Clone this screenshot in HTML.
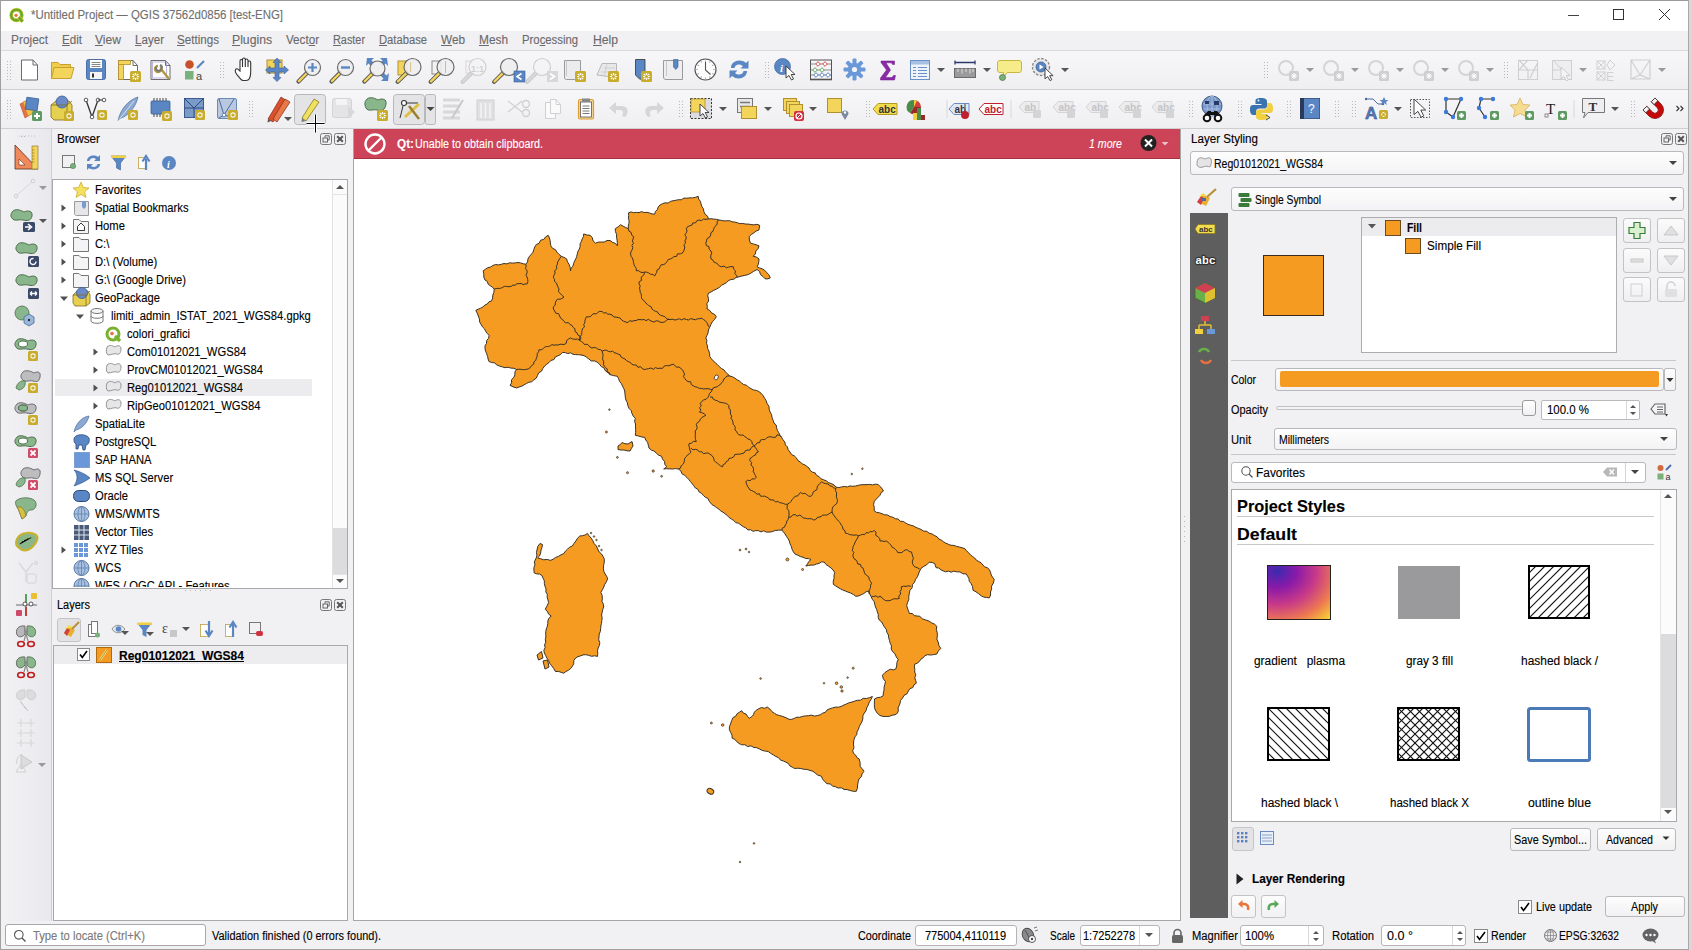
<!DOCTYPE html><html><head><meta charset="utf-8"><style>
html,body{margin:0;padding:0;width:1692px;height:950px;overflow:hidden;background:#fff;}
body{position:relative;font-family:"Liberation Sans", sans-serif;}
.t{position:absolute;white-space:nowrap;line-height:1;-webkit-text-stroke:0.12px currentColor;}
svg{overflow:visible;position:absolute}
</style></head><body>
<div style="position:absolute;left:0px;top:0px;width:1692px;height:950px;box-sizing:border-box;background:#d8d8d8"></div>
<div style="position:absolute;left:0px;top:0px;width:1689px;height:950px;box-sizing:border-box;background:#f1f0f3;border-left:1px solid #a0a0a2;border-top:1px solid #9a9a9e;border-right:1px solid #a8a8ac;border-bottom:1px solid #a0a0a2"></div>
<div style="position:absolute;left:1px;top:1px;width:1687px;height:30px;box-sizing:border-box;background:#fff"></div>
<svg style="position:absolute;left:9px;top:8px" width="18" height="18" viewBox="0 0 18 18"><g transform="scale(0.88)"><circle cx="8.5" cy="8" r="6" fill="#fff" stroke="#e8d040" stroke-width="4.6"/><circle cx="8.5" cy="8" r="6" fill="none" stroke="#6aa82a" stroke-width="3"/><path d="M11 10.5L15.5 15.5" stroke="#e8d040" stroke-width="4.6"/><path d="M11 10.5L15.5 15.5" stroke="#6aa82a" stroke-width="3"/><circle cx="8" cy="8.3" r="1.8" fill="#e87030"/></g></svg>
<div class="t" style="left:31px;top:9.04px;font-size:12px;color:#6f6f6f;transform:scaleX(0.9541);transform-origin:0 0;">*Untitled Project — QGIS 37562d0856 [test-ENG]</div>
<svg style="position:absolute;left:1567px;top:8px" width="14" height="14" viewBox="0 0 14 14"><path d="M1 7.5H12" stroke="#444" stroke-width="1"/></svg>
<svg style="position:absolute;left:1612px;top:8px" width="14" height="14" viewBox="0 0 14 14"><rect x="1.5" y="1.5" width="10" height="10" fill="none" stroke="#333" stroke-width="1"/></svg>
<svg style="position:absolute;left:1658px;top:8px" width="14" height="14" viewBox="0 0 14 14"><path d="M1 1L12 12M12 1L1 12" stroke="#333" stroke-width="1"/></svg>
<div style="position:absolute;left:1px;top:31px;width:1687px;height:19px;box-sizing:border-box;background:#f1f0f3"></div>
<div class="t" style="left:11px;top:34.04px;font-size:12px;color:#6a6a6a;transform:scaleX(0.9907);transform-origin:0 0;">Pro<u>j</u>ect</div>
<div class="t" style="left:62px;top:34.04px;font-size:12px;color:#6a6a6a;transform:scaleX(0.9672);transform-origin:0 0;"><u>E</u>dit</div>
<div class="t" style="left:95px;top:34.04px;font-size:12px;color:#6a6a6a;transform:scaleX(1.0080);transform-origin:0 0;"><u>V</u>iew</div>
<div class="t" style="left:135px;top:34.04px;font-size:12px;color:#6a6a6a;transform:scaleX(0.9661);transform-origin:0 0;"><u>L</u>ayer</div>
<div class="t" style="left:177px;top:34.04px;font-size:12px;color:#6a6a6a;transform:scaleX(0.9686);transform-origin:0 0;"><u>S</u>ettings</div>
<div class="t" style="left:232px;top:34.04px;font-size:12px;color:#6a6a6a;transform:scaleX(1.0163);transform-origin:0 0;"><u>P</u>lugins</div>
<div class="t" style="left:286px;top:34.04px;font-size:12px;color:#6a6a6a;transform:scaleX(0.9700);transform-origin:0 0;">Vect<u>o</u>r</div>
<div class="t" style="left:333px;top:34.04px;font-size:12px;color:#6a6a6a;transform:scaleX(0.9054);transform-origin:0 0;"><u>R</u>aster</div>
<div class="t" style="left:379px;top:34.04px;font-size:12px;color:#6a6a6a;transform:scaleX(0.9344);transform-origin:0 0;"><u>D</u>atabase</div>
<div class="t" style="left:441px;top:34.04px;font-size:12px;color:#6a6a6a;transform:scaleX(0.9813);transform-origin:0 0;"><u>W</u>eb</div>
<div class="t" style="left:479px;top:34.04px;font-size:12px;color:#6a6a6a;transform:scaleX(0.9883);transform-origin:0 0;"><u>M</u>esh</div>
<div class="t" style="left:522px;top:34.04px;font-size:12px;color:#6a6a6a;transform:scaleX(0.9433);transform-origin:0 0;">Pro<u>c</u>essing</div>
<div class="t" style="left:593px;top:34.04px;font-size:12px;color:#6a6a6a;transform:scaleX(1.0129);transform-origin:0 0;"><u>H</u>elp</div>
<div style="position:absolute;left:1px;top:50px;width:1687px;height:1px;box-sizing:border-box;background:#dadada"></div>
<div style="position:absolute;left:1px;top:51px;width:1687px;height:38px;box-sizing:border-box;background:linear-gradient(#f7f7f9,#efeff2)"></div>
<div style="position:absolute;left:1px;top:89px;width:1687px;height:1px;box-sizing:border-box;background:#cfcfd2"></div>
<div style="position:absolute;left:1px;top:90px;width:1687px;height:38px;box-sizing:border-box;background:linear-gradient(#f7f7f9,#efeff2)"></div>
<div style="position:absolute;left:1px;top:128px;width:1687px;height:1px;box-sizing:border-box;background:#cfcfd2"></div>
<div style="position:absolute;left:1px;top:129px;width:51px;height:792px;box-sizing:border-box;background:linear-gradient(90deg,#f2f1f4,#e9e8ec)"></div>
<div style="position:absolute;left:51px;top:129px;width:1px;height:792px;box-sizing:border-box;background:#d0d0d3"></div>
<div class="t" style="left:57px;top:132.84px;font-size:12px;color:#000;transform:scaleX(0.9770);transform-origin:0 0;">Browser</div>
<div style="position:absolute;left:52px;top:179px;width:296px;height:410px;box-sizing:border-box;background:#fff;border:1px solid #a9a9ac"></div>
<div style="position:absolute;left:332px;top:180px;width:15px;height:408px;box-sizing:border-box;background:#fbfbfc;border-left:1px solid #e2e2e4"></div>
<div style="position:absolute;left:333px;top:528px;width:14px;height:46px;box-sizing:border-box;background:#dcdcdf"></div>
<div style="position:absolute;left:333px;top:194px;width:14px;height:1px;box-sizing:border-box;background:#e4e4e6"></div>
<div style="position:absolute;left:333px;top:574px;width:14px;height:1px;box-sizing:border-box;background:#e4e4e6"></div>
<svg style="position:absolute;left:334px;top:182px" width="12" height="10" viewBox="0 0 12 10"><path d="M2 7L6 3L10 7Z" fill="#555"/></svg>
<svg style="position:absolute;left:334px;top:576px" width="12" height="10" viewBox="0 0 12 10"><path d="M2 3L6 7L10 3Z" fill="#555"/></svg>
<div style="position:absolute;left:55px;top:379px;width:257px;height:17px;box-sizing:border-box;background:#ececef"></div>
<div style="position:absolute;left:53px;top:180px;width:279px;height:407px;overflow:hidden">
<div id="bi0" style="position:absolute;left:20px;top:2px;width:16px;height:16px"></div>
<div class="t" style="left:42px;top:3.64px;font-size:12px;color:#000;transform:scaleX(0.935);transform-origin:0 0">Favorites</div>
<svg style="left:7px;top:23px" width="8" height="10"><path d="M1.5 1.5L6 5L1.5 8.5Z" fill="#505050"/></svg>
<div id="bi1" style="position:absolute;left:20px;top:20px;width:16px;height:16px"></div>
<div class="t" style="left:42px;top:21.64px;font-size:12px;color:#000;transform:scaleX(0.935);transform-origin:0 0">Spatial Bookmarks</div>
<svg style="left:7px;top:41px" width="8" height="10"><path d="M1.5 1.5L6 5L1.5 8.5Z" fill="#505050"/></svg>
<div id="bi2" style="position:absolute;left:20px;top:38px;width:16px;height:16px"></div>
<div class="t" style="left:42px;top:39.64px;font-size:12px;color:#000;transform:scaleX(0.935);transform-origin:0 0">Home</div>
<svg style="left:7px;top:59px" width="8" height="10"><path d="M1.5 1.5L6 5L1.5 8.5Z" fill="#505050"/></svg>
<div id="bi3" style="position:absolute;left:20px;top:56px;width:16px;height:16px"></div>
<div class="t" style="left:42px;top:57.64px;font-size:12px;color:#000;transform:scaleX(0.935);transform-origin:0 0">C:\</div>
<svg style="left:7px;top:77px" width="8" height="10"><path d="M1.5 1.5L6 5L1.5 8.5Z" fill="#505050"/></svg>
<div id="bi4" style="position:absolute;left:20px;top:74px;width:16px;height:16px"></div>
<div class="t" style="left:42px;top:75.64px;font-size:12px;color:#000;transform:scaleX(0.935);transform-origin:0 0">D:\ (Volume)</div>
<svg style="left:7px;top:95px" width="8" height="10"><path d="M1.5 1.5L6 5L1.5 8.5Z" fill="#505050"/></svg>
<div id="bi5" style="position:absolute;left:20px;top:92px;width:16px;height:16px"></div>
<div class="t" style="left:42px;top:93.64px;font-size:12px;color:#000;transform:scaleX(0.935);transform-origin:0 0">G:\ (Google Drive)</div>
<svg style="left:6px;top:115px" width="10" height="8"><path d="M1 1.5L9 1.5L5 6Z" fill="#505050"/></svg>
<div id="bi6" style="position:absolute;left:20px;top:110px;width:16px;height:16px"></div>
<div class="t" style="left:42px;top:111.64px;font-size:12px;color:#000;transform:scaleX(0.935);transform-origin:0 0">GeoPackage</div>
<svg style="left:22px;top:133px" width="10" height="8"><path d="M1 1.5L9 1.5L5 6Z" fill="#505050"/></svg>
<div id="bi7" style="position:absolute;left:36px;top:128px;width:16px;height:16px"></div>
<div class="t" style="left:58px;top:129.64px;font-size:12px;color:#000;transform:scaleX(0.935);transform-origin:0 0">limiti_admin_ISTAT_2021_WGS84.gpkg</div>
<div id="bi8" style="position:absolute;left:52px;top:146px;width:16px;height:16px"></div>
<div class="t" style="left:74px;top:147.64px;font-size:12px;color:#000;transform:scaleX(0.935);transform-origin:0 0">colori_grafici</div>
<svg style="left:39px;top:167px" width="8" height="10"><path d="M1.5 1.5L6 5L1.5 8.5Z" fill="#505050"/></svg>
<div id="bi9" style="position:absolute;left:52px;top:164px;width:16px;height:16px"></div>
<div class="t" style="left:74px;top:165.64px;font-size:12px;color:#000;transform:scaleX(0.935);transform-origin:0 0">Com01012021_WGS84</div>
<svg style="left:39px;top:185px" width="8" height="10"><path d="M1.5 1.5L6 5L1.5 8.5Z" fill="#505050"/></svg>
<div id="bi10" style="position:absolute;left:52px;top:182px;width:16px;height:16px"></div>
<div class="t" style="left:74px;top:183.64px;font-size:12px;color:#000;transform:scaleX(0.935);transform-origin:0 0">ProvCM01012021_WGS84</div>
<svg style="left:39px;top:203px" width="8" height="10"><path d="M1.5 1.5L6 5L1.5 8.5Z" fill="#505050"/></svg>
<div id="bi11" style="position:absolute;left:52px;top:200px;width:16px;height:16px"></div>
<div class="t" style="left:74px;top:201.64px;font-size:12px;color:#000;transform:scaleX(0.935);transform-origin:0 0">Reg01012021_WGS84</div>
<svg style="left:39px;top:221px" width="8" height="10"><path d="M1.5 1.5L6 5L1.5 8.5Z" fill="#505050"/></svg>
<div id="bi12" style="position:absolute;left:52px;top:218px;width:16px;height:16px"></div>
<div class="t" style="left:74px;top:219.64px;font-size:12px;color:#000;transform:scaleX(0.935);transform-origin:0 0">RipGeo01012021_WGS84</div>
<div id="bi13" style="position:absolute;left:20px;top:236px;width:16px;height:16px"></div>
<div class="t" style="left:42px;top:237.64px;font-size:12px;color:#000;transform:scaleX(0.935);transform-origin:0 0">SpatiaLite</div>
<div id="bi14" style="position:absolute;left:20px;top:254px;width:16px;height:16px"></div>
<div class="t" style="left:42px;top:255.64px;font-size:12px;color:#000;transform:scaleX(0.935);transform-origin:0 0">PostgreSQL</div>
<div id="bi15" style="position:absolute;left:20px;top:272px;width:16px;height:16px"></div>
<div class="t" style="left:42px;top:273.64px;font-size:12px;color:#000;transform:scaleX(0.935);transform-origin:0 0">SAP HANA</div>
<div id="bi16" style="position:absolute;left:20px;top:290px;width:16px;height:16px"></div>
<div class="t" style="left:42px;top:291.64px;font-size:12px;color:#000;transform:scaleX(0.935);transform-origin:0 0">MS SQL Server</div>
<div id="bi17" style="position:absolute;left:20px;top:308px;width:16px;height:16px"></div>
<div class="t" style="left:42px;top:309.64px;font-size:12px;color:#000;transform:scaleX(0.935);transform-origin:0 0">Oracle</div>
<div id="bi18" style="position:absolute;left:20px;top:326px;width:16px;height:16px"></div>
<div class="t" style="left:42px;top:327.64px;font-size:12px;color:#000;transform:scaleX(0.935);transform-origin:0 0">WMS/WMTS</div>
<div id="bi19" style="position:absolute;left:20px;top:344px;width:16px;height:16px"></div>
<div class="t" style="left:42px;top:345.64px;font-size:12px;color:#000;transform:scaleX(0.935);transform-origin:0 0">Vector Tiles</div>
<svg style="left:7px;top:365px" width="8" height="10"><path d="M1.5 1.5L6 5L1.5 8.5Z" fill="#505050"/></svg>
<div id="bi20" style="position:absolute;left:20px;top:362px;width:16px;height:16px"></div>
<div class="t" style="left:42px;top:363.64px;font-size:12px;color:#000;transform:scaleX(0.935);transform-origin:0 0">XYZ Tiles</div>
<div id="bi21" style="position:absolute;left:20px;top:380px;width:16px;height:16px"></div>
<div class="t" style="left:42px;top:381.64px;font-size:12px;color:#000;transform:scaleX(0.935);transform-origin:0 0">WCS</div>
<div id="bi22" style="position:absolute;left:20px;top:398px;width:16px;height:16px"></div>
<div class="t" style="left:42px;top:399.64px;font-size:12px;color:#000;transform:scaleX(0.935);transform-origin:0 0">WFS / OGC API - Features</div>
</div>
<svg style="position:absolute;left:320px;top:133px" width="12" height="12" viewBox="0 0 12 12"><rect x="0.5" y="0.5" width="11" height="11" rx="2" fill="none" stroke="#777"/><rect x="3" y="5" width="4.5" height="4" fill="none" stroke="#666"/><path d="M5 4.5V2.8H9.2V7H7.8" fill="none" stroke="#666"/></svg>
<svg style="position:absolute;left:334px;top:133px" width="12" height="12" viewBox="0 0 12 12"><rect x="0.5" y="0.5" width="11" height="11" rx="2" fill="none" stroke="#777"/><path d="M3.2 3.2L8.8 8.8M8.8 3.2L3.2 8.8" stroke="#555" stroke-width="2"/></svg>
<div style="position:absolute;left:52px;top:589px;width:296px;height:3px;box-sizing:border-box;background:#f1f0f3"></div>
<div class="t" style="left:57px;top:598.84px;font-size:12px;color:#000;transform:scaleX(0.9162);transform-origin:0 0;">Layers</div>
<svg style="position:absolute;left:320px;top:599px" width="12" height="12" viewBox="0 0 12 12"><rect x="0.5" y="0.5" width="11" height="11" rx="2" fill="none" stroke="#777"/><rect x="3" y="5" width="4.5" height="4" fill="none" stroke="#666"/><path d="M5 4.5V2.8H9.2V7H7.8" fill="none" stroke="#666"/></svg>
<svg style="position:absolute;left:334px;top:599px" width="12" height="12" viewBox="0 0 12 12"><rect x="0.5" y="0.5" width="11" height="11" rx="2" fill="none" stroke="#777"/><path d="M3.2 3.2L8.8 8.8M8.8 3.2L3.2 8.8" stroke="#555" stroke-width="2"/></svg>
<div style="position:absolute;left:57px;top:618px;width:24px;height:24px;box-sizing:border-box;background:#e2e2e5;border:1px solid #c4c4c7;border-radius:3px"></div>
<div style="position:absolute;left:53px;top:645px;width:295px;height:276px;box-sizing:border-box;background:#fff;border:1px solid #a9a9ac"></div>
<div style="position:absolute;left:54px;top:646px;width:293px;height:18px;box-sizing:border-box;background:#ededf0"></div>
<svg style="position:absolute;left:77px;top:648px" width="13" height="13" viewBox="0 0 13 13"><rect x="0.5" y="0.5" width="12" height="12" fill="#fff" stroke="#8a8a8a"/><path d="M3 6.5L5.3 9.5L10 3" fill="none" stroke="#000" stroke-width="1.6"/></svg>
<svg style="position:absolute;left:96px;top:647px" width="16" height="16" viewBox="0 0 16 16"><rect x="0.5" y="0.5" width="15" height="15" fill="#f59b21" stroke="#b06a10"/><path d="M4 13L11 3" stroke="#f2e07a" stroke-width="2.2"/><path d="M4 13L11 3" stroke="#7a6a30" stroke-width="0.6"/></svg>
<div class="t" style="left:119px;top:649.84px;font-size:12px;color:#000;font-weight:bold;transform:scaleX(1.0020);transform-origin:0 0;text-decoration:underline;">Reg01012021_WGS84</div>
<div style="position:absolute;left:353px;top:129px;width:828px;height:792px;box-sizing:border-box;background:#fff;border:1px solid #a6a6a6;border-top:none"></div>
<div style="position:absolute;left:354px;top:129px;width:826px;height:30px;box-sizing:border-box;background:#cd4357"></div>
<div style="position:absolute;left:354px;top:158px;width:826px;height:1px;box-sizing:border-box;background:#a8303f"></div>
<div class="t" style="left:1191px;top:132.84px;font-size:12px;color:#000;transform:scaleX(0.9658);transform-origin:0 0;">Layer Styling</div>
<svg style="position:absolute;left:1661px;top:133px" width="12" height="12" viewBox="0 0 12 12"><rect x="0.5" y="0.5" width="11" height="11" rx="2" fill="none" stroke="#777"/><rect x="3" y="5" width="4.5" height="4" fill="none" stroke="#666"/><path d="M5 4.5V2.8H9.2V7H7.8" fill="none" stroke="#666"/></svg>
<svg style="position:absolute;left:1675px;top:133px" width="12" height="12" viewBox="0 0 12 12"><rect x="0.5" y="0.5" width="11" height="11" rx="2" fill="none" stroke="#777"/><path d="M3.2 3.2L8.8 8.8M8.8 3.2L3.2 8.8" stroke="#555" stroke-width="2"/></svg>
<div style="position:absolute;left:1190px;top:151px;width:494px;height:24px;box-sizing:border-box;background:linear-gradient(#fdfdfd,#f3f3f5);border:1px solid #b9b9bc;border-radius:3px"></div>
<svg style="position:absolute;left:1668px;top:160px" width="10" height="6" viewBox="0 0 10 6"><path d="M1 1H9L5 5Z" fill="#444"/></svg>
<svg style="position:absolute;left:1196px;top:156px" width="17" height="13" viewBox="0 0 17 13"><path d="M2 3C4 1 7 2 9 3C11 2 14 1 15 3C16 6 15 9 14 11C12 10 9 10 7 11C4 12 2 11 1 9C1 7 1 5 2 3Z" fill="#e4e4e6" stroke="#999"/></svg>
<div class="t" style="left:1214px;top:157.84px;font-size:12px;color:#000;transform:scaleX(0.8784);transform-origin:0 0;">Reg01012021_WGS84</div>
<div style="position:absolute;left:1231px;top:187px;width:453px;height:24px;box-sizing:border-box;background:linear-gradient(#fdfdfd,#f3f3f5);border:1px solid #b9b9bc;border-radius:3px"></div>
<svg style="position:absolute;left:1668px;top:196px" width="10" height="6" viewBox="0 0 10 6"><path d="M1 1H9L5 5Z" fill="#444"/></svg>
<div class="t" style="left:1255px;top:193.84px;font-size:12px;color:#000;transform:scaleX(0.8604);transform-origin:0 0;">Single Symbol</div>
<div style="position:absolute;left:1190px;top:213px;width:38px;height:705px;box-sizing:border-box;background:#5e5e5e"></div>
<div style="position:absolute;left:1263px;top:255px;width:61px;height:61px;box-sizing:border-box;background:#f59b21;border:1px solid #3a2a20"></div>
<div style="position:absolute;left:1361px;top:217px;width:256px;height:136px;box-sizing:border-box;background:#fff;border:1px solid #adadb0"></div>
<div style="position:absolute;left:1362px;top:218px;width:254px;height:18px;box-sizing:border-box;background:#ececef"></div>
<svg style="position:absolute;left:1367px;top:223px" width="10" height="7" viewBox="0 0 10 7"><path d="M1 1H9L5 5.5Z" fill="#555"/></svg>
<div style="position:absolute;left:1385px;top:220px;width:16px;height:16px;box-sizing:border-box;background:#f59b21;border:1px solid #6a4a20"></div>
<div class="t" style="left:1407px;top:221.84px;font-size:12px;color:#000;font-weight:bold;transform:scaleX(0.8655);transform-origin:0 0;">Fill</div>
<div style="position:absolute;left:1405px;top:238px;width:16px;height:16px;box-sizing:border-box;background:#f59b21;border:1px solid #6a4a20"></div>
<div class="t" style="left:1427px;top:239.84px;font-size:12px;color:#000;transform:scaleX(0.9757);transform-origin:0 0;">Simple Fill</div>
<div style="position:absolute;left:1623px;top:218px;width:28px;height:25px;box-sizing:border-box;background:linear-gradient(#fbfbfc,#efeff1);border:1px solid #c3c3c6;border-radius:3px"></div>
<svg style="position:absolute;left:1623px;top:218px" width="28" height="25" viewBox="0 0 28 25"><path d="M11 6H17V11H22V17H17V22H11V17H6V11H11Z" transform="translate(0,-1.5) scale(1)" fill="#d8f0d0" stroke="#3a7a3a" stroke-width="1.2"/></svg>
<div style="position:absolute;left:1657px;top:218px;width:28px;height:25px;box-sizing:border-box;background:linear-gradient(#fbfbfc,#efeff1);border:1px solid #c3c3c6;border-radius:3px"></div>
<svg style="position:absolute;left:1657px;top:218px" width="28" height="25" viewBox="0 0 28 25"><path d="M7 17L14 8L21 17Z" fill="#e0e0e2" stroke="#c8c8ca"/></svg>
<div style="position:absolute;left:1623px;top:248px;width:28px;height:25px;box-sizing:border-box;background:linear-gradient(#fbfbfc,#efeff1);border:1px solid #c3c3c6;border-radius:3px"></div>
<svg style="position:absolute;left:1623px;top:248px" width="28" height="25" viewBox="0 0 28 25"><rect x="8" y="11" width="12" height="3" fill="#e0e0e2" stroke="#c8c8ca"/></svg>
<div style="position:absolute;left:1657px;top:248px;width:28px;height:25px;box-sizing:border-box;background:linear-gradient(#fbfbfc,#efeff1);border:1px solid #c3c3c6;border-radius:3px"></div>
<svg style="position:absolute;left:1657px;top:248px" width="28" height="25" viewBox="0 0 28 25"><path d="M7 8L14 17L21 8Z" fill="#e0e0e2" stroke="#c8c8ca"/></svg>
<div style="position:absolute;left:1623px;top:277px;width:28px;height:25px;box-sizing:border-box;background:linear-gradient(#fbfbfc,#efeff1);border:1px solid #c3c3c6;border-radius:3px"></div>
<svg style="position:absolute;left:1623px;top:277px" width="28" height="25" viewBox="0 0 28 25"><rect x="8" y="7" width="11" height="12" fill="none" stroke="#cfcfd1"/></svg>
<div style="position:absolute;left:1657px;top:277px;width:28px;height:25px;box-sizing:border-box;background:linear-gradient(#fbfbfc,#efeff1);border:1px solid #c3c3c6;border-radius:3px"></div>
<svg style="position:absolute;left:1657px;top:277px" width="28" height="25" viewBox="0 0 28 25"><rect x="8" y="12" width="12" height="8" rx="1" fill="#e0e0e2"/><path d="M10 12V9a4 4 0 0 1 8 0" fill="none" stroke="#d0d0d2" stroke-width="1.5"/></svg>
<div style="position:absolute;left:1231px;top:360px;width:445px;height:1px;box-sizing:border-box;background:#c8c8cb"></div>
<div class="t" style="left:1231px;top:373.84px;font-size:12px;color:#000;transform:scaleX(0.8718);transform-origin:0 0;">Color</div>
<div style="position:absolute;left:1275px;top:368px;width:389px;height:23px;box-sizing:border-box;background:linear-gradient(#fdfdfd,#f1f1f3);border:1px solid #b9b9bc;border-radius:3px"></div>
<div style="position:absolute;left:1280px;top:371px;width:379px;height:16px;box-sizing:border-box;background:#f59b21;border-radius:2px"></div>
<div style="position:absolute;left:1664px;top:368px;width:12px;height:23px;box-sizing:border-box;background:linear-gradient(#fdfdfd,#f1f1f3);border:1px solid #b9b9bc;border-radius:2px"></div>
<svg style="position:absolute;left:1665px;top:377px" width="10" height="6" viewBox="0 0 10 6"><path d="M1.5 1H8.5L5 5Z" fill="#333"/></svg>
<div class="t" style="left:1231px;top:403.84px;font-size:12px;color:#000;transform:scaleX(0.9095);transform-origin:0 0;">Opacity</div>
<div style="position:absolute;left:1276px;top:406px;width:250px;height:4px;box-sizing:border-box;background:#f3f3f5;border:1px solid #c2c2c5;border-radius:2px"></div>
<div style="position:absolute;left:1522px;top:400px;width:14px;height:16px;box-sizing:border-box;background:linear-gradient(#fff,#f0f0f2);border:1px solid #9a9a9d;border-radius:3px"></div>
<div style="position:absolute;left:1541px;top:400px;width:99px;height:20px;box-sizing:border-box;background:#fff;border:1px solid #b9b9bc;border-radius:2px"></div>
<div style="position:absolute;left:1626px;top:401px;width:1px;height:18px;box-sizing:border-box;background:#d8d8da"></div>
<svg style="position:absolute;left:1627px;top:402px" width="12" height="16" viewBox="0 0 12 16"><path d="M3 6L6 3L9 6Z M3 10L6 13L9 10Z" fill="#555"/></svg>
<div class="t" style="left:1547px;top:403.84px;font-size:12px;color:#000;transform:scaleX(0.9538);transform-origin:0 0;">100.0 %</div>
<svg style="position:absolute;left:1649px;top:400px" width="24" height="18" viewBox="0 0 24 18"><path d="M2 9L6 4H16V14H6Z" fill="#f4f4f6" stroke="#666" stroke-width="1.2"/><path d="M8 7H14M8 9.5H14M8 12H14" stroke="#666"/><path d="M16 14L19 14L17.5 16.5Z" fill="#333"/></svg>
<div class="t" style="left:1231px;top:433.84px;font-size:12px;color:#000;transform:scaleX(0.9372);transform-origin:0 0;">Unit</div>
<div style="position:absolute;left:1274px;top:428px;width:403px;height:22px;box-sizing:border-box;background:linear-gradient(#fdfdfd,#f3f3f5);border:1px solid #b9b9bc;border-radius:3px"></div>
<svg style="position:absolute;left:1659px;top:436px" width="10" height="6" viewBox="0 0 10 6"><path d="M1 1H9L5 5Z" fill="#444"/></svg>
<div class="t" style="left:1279px;top:433.84px;font-size:12px;color:#000;transform:scaleX(0.8720);transform-origin:0 0;">Millimeters</div>
<div style="position:absolute;left:1231px;top:454px;width:445px;height:1px;box-sizing:border-box;background:#c8c8cb"></div>
<div style="position:absolute;left:1231px;top:462px;width:415px;height:21px;box-sizing:border-box;background:#fff;border:1px solid #b9b9bc;border-radius:3px"></div>
<div style="position:absolute;left:1625px;top:463px;width:1px;height:19px;box-sizing:border-box;background:#d4d4d6"></div>
<svg style="position:absolute;left:1630px;top:469px" width="10" height="6" viewBox="0 0 10 6"><path d="M1 1H9L5 5Z" fill="#444"/></svg>
<svg style="position:absolute;left:1240px;top:465px" width="14" height="14" viewBox="0 0 14 14"><circle cx="6" cy="6" r="4.2" fill="none" stroke="#555" stroke-width="1.1"/><path d="M9 9L12.5 12.5" stroke="#555" stroke-width="1.3"/></svg>
<div class="t" style="left:1256px;top:466.84px;font-size:12px;color:#000;transform:scaleX(0.9929);transform-origin:0 0;">Favorites</div>
<svg style="position:absolute;left:1602px;top:466px" width="16" height="12" viewBox="0 0 16 12"><path d="M1 6L5 1.5H15V10.5H5Z" fill="#b8b8ba"/><path d="M7.5 3.5L12 8.5M12 3.5L7.5 8.5" stroke="#fff" stroke-width="1.4"/></svg>
<svg style="position:absolute;left:1656px;top:464px" width="18" height="18" viewBox="0 0 18 18"><circle cx="4.5" cy="4" r="3" fill="#d26a40"/><rect x="1.5" y="9.5" width="6" height="6" fill="#7ab07a"/><path d="M10 6L15 1" stroke="#4a6ab0" stroke-width="1.8"/><text x="9.5" y="15.5" font-size="9" font-family="Liberation Sans" fill="#333">a</text></svg>
<div style="position:absolute;left:1231px;top:489px;width:446px;height:333px;box-sizing:border-box;background:#fff;border:1px solid #a9a9ac"></div>
<div style="position:absolute;left:1660px;top:490px;width:16px;height:331px;box-sizing:border-box;background:#fbfbfc;border-left:1px solid #e4e4e6"></div>
<div style="position:absolute;left:1661px;top:634px;width:15px;height:174px;box-sizing:border-box;background:#dcdcdf"></div>
<svg style="position:absolute;left:1663px;top:492px" width="10" height="8" viewBox="0 0 10 8"><path d="M1 6L5 2L9 6Z" fill="#555"/></svg>
<svg style="position:absolute;left:1663px;top:808px" width="10" height="8" viewBox="0 0 10 8"><path d="M1 2L5 6L9 2Z" fill="#555"/></svg>
<div class="t" style="left:1237px;top:497.61px;font-size:17px;color:#000;font-weight:bold;transform:scaleX(0.9605);transform-origin:0 0;">Project Styles</div>
<div style="position:absolute;left:1237px;top:516px;width:417px;height:1px;box-sizing:border-box;background:#c8c8cb"></div>
<div class="t" style="left:1237px;top:525.61px;font-size:17px;color:#000;font-weight:bold;transform:scaleX(1.0413);transform-origin:0 0;">Default</div>
<div style="position:absolute;left:1237px;top:544px;width:417px;height:1px;box-sizing:border-box;background:#c8c8cb"></div>
<svg style="left:1267px;top:565px" width="64" height="55"><defs><radialGradient id="pl" cx="0.15" cy="0.1" r="1.25"><stop offset="0" stop-color="#3a2ab0"/><stop offset="0.25" stop-color="#8a1aa8"/><stop offset="0.5" stop-color="#c83a88"/><stop offset="0.75" stop-color="#ee7a50"/><stop offset="1" stop-color="#f8e030"/></radialGradient></defs><rect x="0.5" y="0.5" width="63" height="54" fill="url(#pl)" stroke="#222"/></svg>
<div style="position:absolute;left:1398px;top:566px;width:62px;height:53px;box-sizing:border-box;background:#9a999b"></div>
<svg style="position:absolute;left:1528px;top:565px" width="62" height="54" viewBox="0 0 62 54"><clipPath id="c1528565"><rect x="0" y="0" width="62" height="54"/></clipPath><g clip-path="url(#c1528565)"><path d="M-54 54L0 0" stroke="#111" stroke-width="1.1"/><path d="M-45 54L9 0" stroke="#111" stroke-width="1.1"/><path d="M-36 54L18 0" stroke="#111" stroke-width="1.1"/><path d="M-27 54L27 0" stroke="#111" stroke-width="1.1"/><path d="M-18 54L36 0" stroke="#111" stroke-width="1.1"/><path d="M-9 54L45 0" stroke="#111" stroke-width="1.1"/><path d="M0 54L54 0" stroke="#111" stroke-width="1.1"/><path d="M9 54L63 0" stroke="#111" stroke-width="1.1"/><path d="M18 54L72 0" stroke="#111" stroke-width="1.1"/><path d="M27 54L81 0" stroke="#111" stroke-width="1.1"/><path d="M36 54L90 0" stroke="#111" stroke-width="1.1"/><path d="M45 54L99 0" stroke="#111" stroke-width="1.1"/><path d="M54 54L108 0" stroke="#111" stroke-width="1.1"/><path d="M63 54L117 0" stroke="#111" stroke-width="1.1"/><path d="M72 54L126 0" stroke="#111" stroke-width="1.1"/><path d="M81 54L135 0" stroke="#111" stroke-width="1.1"/><path d="M90 54L144 0" stroke="#111" stroke-width="1.1"/><path d="M99 54L153 0" stroke="#111" stroke-width="1.1"/><path d="M108 54L162 0" stroke="#111" stroke-width="1.1"/></g><rect x="1" y="1" width="60" height="52" fill="none" stroke="#000" stroke-width="2"/></svg>
<svg style="position:absolute;left:1267px;top:707px" width="63" height="54" viewBox="0 0 63 54"><clipPath id="c1267707"><rect x="0" y="0" width="63" height="54"/></clipPath><g clip-path="url(#c1267707)"><path d="M-54 0L0 54" stroke="#111" stroke-width="1.1"/><path d="M-45 0L9 54" stroke="#111" stroke-width="1.1"/><path d="M-36 0L18 54" stroke="#111" stroke-width="1.1"/><path d="M-27 0L27 54" stroke="#111" stroke-width="1.1"/><path d="M-18 0L36 54" stroke="#111" stroke-width="1.1"/><path d="M-9 0L45 54" stroke="#111" stroke-width="1.1"/><path d="M0 0L54 54" stroke="#111" stroke-width="1.1"/><path d="M9 0L63 54" stroke="#111" stroke-width="1.1"/><path d="M18 0L72 54" stroke="#111" stroke-width="1.1"/><path d="M27 0L81 54" stroke="#111" stroke-width="1.1"/><path d="M36 0L90 54" stroke="#111" stroke-width="1.1"/><path d="M45 0L99 54" stroke="#111" stroke-width="1.1"/><path d="M54 0L108 54" stroke="#111" stroke-width="1.1"/><path d="M63 0L117 54" stroke="#111" stroke-width="1.1"/><path d="M72 0L126 54" stroke="#111" stroke-width="1.1"/><path d="M81 0L135 54" stroke="#111" stroke-width="1.1"/><path d="M90 0L144 54" stroke="#111" stroke-width="1.1"/><path d="M99 0L153 54" stroke="#111" stroke-width="1.1"/><path d="M108 0L162 54" stroke="#111" stroke-width="1.1"/></g><rect x="1" y="1" width="61" height="52" fill="none" stroke="#000" stroke-width="2"/></svg>
<svg style="position:absolute;left:1397px;top:707px" width="63" height="54" viewBox="0 0 63 54"><clipPath id="c1397707"><rect x="0" y="0" width="63" height="54"/></clipPath><g clip-path="url(#c1397707)"><path d="M-54 54L0 0" stroke="#111" stroke-width="1.1"/><path d="M-45 54L9 0" stroke="#111" stroke-width="1.1"/><path d="M-36 54L18 0" stroke="#111" stroke-width="1.1"/><path d="M-27 54L27 0" stroke="#111" stroke-width="1.1"/><path d="M-18 54L36 0" stroke="#111" stroke-width="1.1"/><path d="M-9 54L45 0" stroke="#111" stroke-width="1.1"/><path d="M0 54L54 0" stroke="#111" stroke-width="1.1"/><path d="M9 54L63 0" stroke="#111" stroke-width="1.1"/><path d="M18 54L72 0" stroke="#111" stroke-width="1.1"/><path d="M27 54L81 0" stroke="#111" stroke-width="1.1"/><path d="M36 54L90 0" stroke="#111" stroke-width="1.1"/><path d="M45 54L99 0" stroke="#111" stroke-width="1.1"/><path d="M54 54L108 0" stroke="#111" stroke-width="1.1"/><path d="M63 54L117 0" stroke="#111" stroke-width="1.1"/><path d="M72 54L126 0" stroke="#111" stroke-width="1.1"/><path d="M81 54L135 0" stroke="#111" stroke-width="1.1"/><path d="M90 54L144 0" stroke="#111" stroke-width="1.1"/><path d="M99 54L153 0" stroke="#111" stroke-width="1.1"/><path d="M108 54L162 0" stroke="#111" stroke-width="1.1"/><path d="M-54 0L0 54" stroke="#111" stroke-width="1.1"/><path d="M-45 0L9 54" stroke="#111" stroke-width="1.1"/><path d="M-36 0L18 54" stroke="#111" stroke-width="1.1"/><path d="M-27 0L27 54" stroke="#111" stroke-width="1.1"/><path d="M-18 0L36 54" stroke="#111" stroke-width="1.1"/><path d="M-9 0L45 54" stroke="#111" stroke-width="1.1"/><path d="M0 0L54 54" stroke="#111" stroke-width="1.1"/><path d="M9 0L63 54" stroke="#111" stroke-width="1.1"/><path d="M18 0L72 54" stroke="#111" stroke-width="1.1"/><path d="M27 0L81 54" stroke="#111" stroke-width="1.1"/><path d="M36 0L90 54" stroke="#111" stroke-width="1.1"/><path d="M45 0L99 54" stroke="#111" stroke-width="1.1"/><path d="M54 0L108 54" stroke="#111" stroke-width="1.1"/><path d="M63 0L117 54" stroke="#111" stroke-width="1.1"/><path d="M72 0L126 54" stroke="#111" stroke-width="1.1"/><path d="M81 0L135 54" stroke="#111" stroke-width="1.1"/><path d="M90 0L144 54" stroke="#111" stroke-width="1.1"/><path d="M99 0L153 54" stroke="#111" stroke-width="1.1"/><path d="M108 0L162 54" stroke="#111" stroke-width="1.1"/></g><rect x="1" y="1" width="61" height="52" fill="none" stroke="#000" stroke-width="2"/></svg>
<svg style="position:absolute;left:1527px;top:707px" width="64" height="55" viewBox="0 0 64 55"><rect x="1.5" y="1.5" width="61" height="52" rx="2" fill="#fff" stroke="#4a7ab8" stroke-width="3"/></svg>
<div class="t" style="left:1254px;top:654.84px;font-size:12px;color:#000;transform:scaleX(0.9886);transform-origin:0 0;">gradient&nbsp;&nbsp;&nbsp;plasma</div>
<div class="t" style="left:1405.5px;top:654.84px;font-size:12px;color:#000;transform:scaleX(0.9788);transform-origin:0 0;">gray 3 fill</div>
<div class="t" style="left:1520.5px;top:654.84px;font-size:12px;color:#000;transform:scaleX(0.9950);transform-origin:0 0;">hashed black /</div>
<div class="t" style="left:1260.5px;top:796.84px;font-size:12px;color:#000;transform:scaleX(0.9950);transform-origin:0 0;">hashed black \</div>
<div class="t" style="left:1389.5px;top:796.84px;font-size:12px;color:#000;transform:scaleX(0.9628);transform-origin:0 0;">hashed black X</div>
<div class="t" style="left:1527.5px;top:796.84px;font-size:12px;color:#000;transform:scaleX(1.0263);transform-origin:0 0;">outline blue</div>
<div style="position:absolute;left:1232px;top:827px;width:22px;height:24px;box-sizing:border-box;background:#e3e3e6;border:1px solid #c6c6c9;border-radius:3px"></div>
<svg style="position:absolute;left:1236px;top:831px" width="14" height="14" viewBox="0 0 14 14"><rect x="1" y="1" width="2.4" height="2.4" fill="#5a82c0"/><rect x="1" y="5" width="2.4" height="2.4" fill="#5a82c0"/><rect x="1" y="9" width="2.4" height="2.4" fill="#5a82c0"/><rect x="5" y="1" width="2.4" height="2.4" fill="#5a82c0"/><rect x="5" y="5" width="2.4" height="2.4" fill="#5a82c0"/><rect x="5" y="9" width="2.4" height="2.4" fill="#5a82c0"/><rect x="9" y="1" width="2.4" height="2.4" fill="#5a82c0"/><rect x="9" y="5" width="2.4" height="2.4" fill="#5a82c0"/><rect x="9" y="9" width="2.4" height="2.4" fill="#5a82c0"/></svg>
<svg style="position:absolute;left:1260px;top:831px" width="14" height="14" viewBox="0 0 14 14"><rect x="0.5" y="0.5" width="13" height="13" fill="#eaf0f8" stroke="#6a8ac0"/><path d="M2 4H12M2 7H12M2 10H12" stroke="#8aa2cc"/></svg>
<div style="position:absolute;left:1510px;top:828px;width:81px;height:23px;box-sizing:border-box;background:linear-gradient(#fdfdfd,#f1f1f3);border:1px solid #b9b9bc;border-radius:3px"></div>
<div class="t" style="left:1514px;top:833.84px;font-size:12px;color:#000;transform:scaleX(0.9046);transform-origin:0 0;">Save Symbol...</div>
<div style="position:absolute;left:1597px;top:828px;width:79px;height:23px;box-sizing:border-box;background:linear-gradient(#fdfdfd,#f1f1f3);border:1px solid #b9b9bc;border-radius:3px"></div>
<div class="t" style="left:1606px;top:833.84px;font-size:12px;color:#000;transform:scaleX(0.8806);transform-origin:0 0;">Advanced</div>
<svg style="position:absolute;left:1662px;top:836px" width="8" height="5" viewBox="0 0 8 5"><path d="M0.5 0.5H7.5L4 4Z" fill="#333"/></svg>
<svg style="position:absolute;left:1235px;top:872px" width="10" height="14" viewBox="0 0 10 14"><path d="M1.5 1.5L8.5 7L1.5 12.5Z" fill="#222"/></svg>
<div class="t" style="left:1252px;top:872.84px;font-size:12px;color:#000;font-weight:bold;transform:scaleX(0.9821);transform-origin:0 0;">Layer Rendering</div>
<div style="position:absolute;left:1231px;top:895px;width:25px;height:23px;box-sizing:border-box;background:linear-gradient(#fdfdfd,#f1f1f3);border:1px solid #c3c3c6;border-radius:3px"></div>
<div style="position:absolute;left:1261px;top:895px;width:25px;height:23px;box-sizing:border-box;background:linear-gradient(#fdfdfd,#f1f1f3);border:1px solid #c3c3c6;border-radius:3px"></div>
<svg style="position:absolute;left:1237px;top:899px" width="14" height="14" viewBox="0 0 14 14"><path d="M11 11C12 7 10 5 7 5H4" fill="none" stroke="#e8743a" stroke-width="2.6"/><path d="M1 5L5.5 1V9Z" fill="#e8743a"/></svg>
<svg style="position:absolute;left:1266px;top:899px" width="14" height="14" viewBox="0 0 14 14"><path d="M3 11C2 7 4 5 7 5H10" fill="none" stroke="#5aa85a" stroke-width="2.6"/><path d="M13 5L8.5 1V9Z" fill="#5aa85a"/></svg>
<svg style="position:absolute;left:1518px;top:900px" width="14" height="14" viewBox="0 0 14 14"><rect x="0.5" y="0.5" width="13" height="13" fill="#fff" stroke="#8a8a8a"/><path d="M3 7L5.5 10.5L11 3" fill="none" stroke="#000" stroke-width="1.6"/></svg>
<div class="t" style="left:1536px;top:900.84px;font-size:12px;color:#000;transform:scaleX(0.9025);transform-origin:0 0;">Live update</div>
<div style="position:absolute;left:1605px;top:896px;width:80px;height:21px;box-sizing:border-box;background:linear-gradient(#fdfdfd,#f1f1f3);border:1px solid #b9b9bc;border-radius:3px"></div>
<div class="t" style="left:1631px;top:900.84px;font-size:12px;color:#000;transform:scaleX(0.8994);transform-origin:0 0;">Apply</div>
<div style="position:absolute;left:5px;top:924px;width:201px;height:22px;box-sizing:border-box;background:#fff;border:1px solid #a8a8ab;border-radius:3px"></div>
<svg style="position:absolute;left:13px;top:929px" width="14" height="14" viewBox="0 0 14 14"><circle cx="5.8" cy="5.8" r="4.3" fill="none" stroke="#555" stroke-width="1.1"/><path d="M9 9L12.5 12.5" stroke="#555" stroke-width="1.4"/></svg>
<div class="t" style="left:33px;top:929.84px;font-size:12px;color:#7a7a7a;transform:scaleX(0.9355);transform-origin:0 0;">Type to locate (Ctrl+K)</div>
<div class="t" style="left:212px;top:929.84px;font-size:12px;color:#000;transform:scaleX(0.9092);transform-origin:0 0;">Validation finished (0 errors found).</div>
<div class="t" style="left:858px;top:929.84px;font-size:12px;color:#000;transform:scaleX(0.9028);transform-origin:0 0;">Coordinate</div>
<div style="position:absolute;left:915px;top:925px;width:102px;height:21px;box-sizing:border-box;background:#fff;border:1px solid #b5b5b8;border-radius:3px"></div>
<div class="t" style="left:925px;top:929.84px;font-size:12px;color:#000;transform:scaleX(0.9172);transform-origin:0 0;">775004,4110119</div>
<div class="t" style="left:1050px;top:929.84px;font-size:12px;color:#000;transform:scaleX(0.8328);transform-origin:0 0;">Scale</div>
<div style="position:absolute;left:1080px;top:925px;width:80px;height:21px;box-sizing:border-box;background:#fff;border:1px solid #b5b5b8;border-radius:3px"></div>
<div style="position:absolute;left:1139px;top:926px;width:1px;height:19px;box-sizing:border-box;background:#dadadc"></div>
<svg style="position:absolute;left:1144px;top:932px" width="10" height="6" viewBox="0 0 10 6"><path d="M1 1H9L5 5Z" fill="#555"/></svg>
<div class="t" style="left:1083px;top:929.84px;font-size:12px;color:#000;transform:scaleX(0.9167);transform-origin:0 0;">1:7252278</div>
<svg style="position:absolute;left:1171px;top:928px" width="13" height="16" viewBox="0 0 13 16"><path d="M3 7V5a3.5 3.5 0 0 1 7 0V7" fill="none" stroke="#666" stroke-width="1.6"/><rect x="1" y="7" width="11" height="8" rx="1.5" fill="#666"/></svg>
<div class="t" style="left:1192px;top:929.84px;font-size:12px;color:#000;transform:scaleX(0.9320);transform-origin:0 0;">Magnifier</div>
<div style="position:absolute;left:1240px;top:925px;width:84px;height:21px;box-sizing:border-box;background:#fff;border:1px solid #b5b5b8;border-radius:3px"></div>
<div style="position:absolute;left:1308px;top:926px;width:1px;height:19px;box-sizing:border-box;background:#dadadc"></div>
<svg style="position:absolute;left:1310px;top:927px" width="12" height="17" viewBox="0 0 12 17"><path d="M3 7L6 4L9 7Z M3 11L6 14L9 11Z" fill="#555"/></svg>
<div class="t" style="left:1245px;top:929.84px;font-size:12px;color:#000;transform:scaleX(0.9449);transform-origin:0 0;">100%</div>
<div class="t" style="left:1332px;top:929.84px;font-size:12px;color:#000;transform:scaleX(0.9397);transform-origin:0 0;">Rotation</div>
<div style="position:absolute;left:1381px;top:925px;width:85px;height:21px;box-sizing:border-box;background:#fff;border:1px solid #b5b5b8;border-radius:3px"></div>
<div style="position:absolute;left:1452px;top:926px;width:1px;height:19px;box-sizing:border-box;background:#dadadc"></div>
<svg style="position:absolute;left:1454px;top:927px" width="12" height="17" viewBox="0 0 12 17"><path d="M3 7L6 4L9 7Z M3 11L6 14L9 11Z" fill="#555"/></svg>
<div class="t" style="left:1387px;top:929.84px;font-size:12px;color:#000;transform:scaleX(1.0478);transform-origin:0 0;">0.0 °</div>
<svg style="position:absolute;left:1474px;top:929px" width="14" height="14" viewBox="0 0 14 14"><rect x="0.5" y="0.5" width="13" height="13" fill="#fff" stroke="#8a8a8a"/><path d="M3 7L5.5 10.5L11 3" fill="none" stroke="#000" stroke-width="1.6"/></svg>
<div class="t" style="left:1491px;top:929.84px;font-size:12px;color:#000;transform:scaleX(0.8892);transform-origin:0 0;">Render</div>
<svg style="position:absolute;left:1543px;top:928px" width="15" height="15" viewBox="0 0 15 15"><circle cx="7.5" cy="7.5" r="6" fill="#eee" stroke="#777"/><path d="M1.5 7.5H13.5M7.5 1.5V13.5M3 4H12M3 11H12" stroke="#888" stroke-width="0.8"/><ellipse cx="7.5" cy="7.5" rx="3" ry="6" fill="none" stroke="#888" stroke-width="0.8"/></svg>
<div class="t" style="left:1559px;top:929.84px;font-size:12px;color:#000;transform:scaleX(0.8565);transform-origin:0 0;">EPSG:32632</div>
<svg style="position:absolute;left:1642px;top:928px" width="18" height="16" viewBox="0 0 18 16"><ellipse cx="8.5" cy="7" rx="8" ry="6.5" fill="#636363"/><path d="M9 12L14 15.5L12 10Z" fill="#636363"/><circle cx="4.5" cy="7" r="1.2" fill="#fff"/><circle cx="8.5" cy="7" r="1.2" fill="#fff"/><circle cx="12.5" cy="7" r="1.2" fill="#fff"/></svg>
<svg style="position:absolute;left:1021px;top:926px" width="18" height="18" viewBox="0 0 18 18"><ellipse cx="7" cy="9" rx="5.5" ry="7" transform="rotate(-25 7 9)" fill="#8a8a8c" stroke="#444" stroke-width="0.9"/><path d="M4 4L9 13" stroke="#444" stroke-width="0.8"/><circle cx="11" cy="13" r="3.5" fill="#fff" stroke="#444" stroke-width="0.9"/><circle cx="11" cy="13" r="1.2" fill="#444"/><path d="M13 2L16 1M14 5L17 4" stroke="#555" stroke-width="0.8"/></svg>
<div style="position:absolute;left:185px;top:590px;width:1px;height:1px;box-sizing:border-box;background:#b8b8bb"></div>
<div style="position:absolute;left:190px;top:590px;width:1px;height:1px;box-sizing:border-box;background:#b8b8bb"></div>
<div style="position:absolute;left:195px;top:590px;width:1px;height:1px;box-sizing:border-box;background:#b8b8bb"></div>
<div style="position:absolute;left:200px;top:590px;width:1px;height:1px;box-sizing:border-box;background:#b8b8bb"></div>
<div style="position:absolute;left:205px;top:590px;width:1px;height:1px;box-sizing:border-box;background:#b8b8bb"></div>
<div style="position:absolute;left:210px;top:590px;width:1px;height:1px;box-sizing:border-box;background:#b8b8bb"></div>
<div style="position:absolute;left:1184px;top:516px;width:1px;height:1px;box-sizing:border-box;background:#b8b8bb"></div>
<div style="position:absolute;left:1184px;top:521px;width:1px;height:1px;box-sizing:border-box;background:#b8b8bb"></div>
<div style="position:absolute;left:1184px;top:526px;width:1px;height:1px;box-sizing:border-box;background:#b8b8bb"></div>
<div style="position:absolute;left:1184px;top:531px;width:1px;height:1px;box-sizing:border-box;background:#b8b8bb"></div>
<div style="position:absolute;left:1184px;top:536px;width:1px;height:1px;box-sizing:border-box;background:#b8b8bb"></div>
<div style="position:absolute;left:1184px;top:541px;width:1px;height:1px;box-sizing:border-box;background:#b8b8bb"></div>
<svg style="left:0;top:0" width="1692" height="950" viewBox="0 0 1692 950"><g fill="#f59b21" stroke="#3a3226" stroke-width="1" stroke-linejoin="round"><path d="M483.2 270.8 L485.5 269.2 L487.8 267.7 L490.6 267.0 L492.9 265.5 L495.6 264.5 L498.5 264.9 L501.3 264.3 L504.0 263.5 L506.9 263.9 L509.6 262.8 L512.5 263.1 L515.3 262.9 L518.0 262.5 L520.6 262.9 L523.2 263.8 L525.8 264.2 L527.6 262.0 L527.9 259.0 L529.3 256.6 L531.2 254.4 L533.0 252.2 L533.8 249.5 L534.8 246.9 L536.3 244.5 L539.1 243.3 L540.6 240.2 L543.8 239.4 L545.6 236.9 L548.2 235.3 L549.4 237.8 L550.1 240.4 L550.4 243.1 L550.8 245.8 L552.5 248.3 L555.4 249.6 L557.0 252.2 L559.0 254.4 L561.3 256.3 L564.0 257.4 L566.6 258.9 L567.5 261.9 L569.2 264.6 L570.2 267.6 L570.5 270.8 L571.1 268.2 L572.9 266.2 L573.6 263.6 L574.5 261.2 L575.8 258.9 L576.7 256.4 L577.3 253.9 L577.9 251.3 L579.4 249.0 L580.1 246.5 L580.1 243.8 L581.4 241.4 L582.2 238.9 L583.5 236.6 L583.7 233.9 L586.9 235.0 L590.3 235.3 L592.3 237.7 L593.1 241.0 L595.5 243.2 L598.3 242.1 L601.3 242.0 L604.3 242.0 L607.0 240.5 L610.0 240.5 L612.5 242.3 L615.4 243.4 L617.4 245.8 L617.3 242.9 L617.1 240.0 L616.5 237.2 L616.6 234.3 L615.4 231.6 L615.3 228.7 L618.1 226.9 L620.5 224.7 L623.1 226.2 L625.7 227.5 L628.4 228.7 L628.3 226.1 L628.9 223.4 L629.1 220.8 L628.4 218.2 L628.7 215.5 L628.4 212.9 L631.0 211.9 L633.7 212.7 L636.3 212.4 L639.0 212.6 L641.6 211.6 L644.1 212.6 L646.9 212.3 L649.5 213.0 L652.0 213.9 L654.7 214.2 L655.4 211.5 L657.3 209.6 L658.2 207.0 L660.0 205.0 L662.5 203.7 L665.1 202.8 L668.0 203.1 L670.4 201.4 L673.0 200.8 L675.7 200.3 L678.4 199.7 L681.3 199.8 L683.9 198.1 L686.9 198.2 L689.7 197.8 L692.6 197.9 L695.5 197.3 L698.2 196.3 L698.6 199.0 L700.3 201.2 L701.0 203.8 L701.8 206.3 L703.3 208.7 L703.9 211.7 L705.1 214.3 L707.6 216.2 L708.4 219.0 L711.1 218.7 L713.7 219.1 L716.4 219.3 L719.0 220.0 L721.6 220.4 L724.2 220.9 L726.9 220.8 L729.6 220.7 L732.1 221.8 L734.8 222.1 L737.3 222.7 L739.9 223.7 L742.6 223.4 L745.4 224.0 L748.3 224.1 L751.1 224.5 L754.0 224.9 L756.9 224.3 L759.7 225.3 L758.9 230.0 L756.1 231.1 L753.8 232.9 L751.3 234.5 L749.2 236.6 L749.4 240.0 L750.5 243.2 L753.4 243.9 L756.2 244.8 L759.0 245.8 L758.1 248.7 L755.9 250.9 L755.3 254.0 L753.2 256.3 L756.4 257.0 L759.0 259.0 L758.8 261.7 L758.3 264.3 L757.1 266.8 L759.5 267.9 L762.1 268.8 L764.4 270.1 L766.3 272.1 L768.8 274.7 L770.3 277.9 L767.7 278.9 L765.0 278.7 L762.9 276.5 L760.5 274.6 L759.5 271.4 L757.1 269.5 L753.7 271.3 L750.5 273.4 L747.7 274.7 L744.8 275.4 L741.9 276.0 L739.0 276.8 L736.0 277.4 L733.9 279.2 L730.9 279.5 L728.4 280.7 L726.4 282.7 L724.0 284.0 L721.6 285.3 L719.3 287.4 L716.6 289.0 L713.8 290.3 L711.2 291.9 L708.4 293.2 L707.7 295.8 L708.5 298.5 L708.5 301.2 L706.8 303.7 L707.3 306.4 L707.1 309.0 L709.8 310.5 L711.7 313.0 L714.5 314.3 L716.3 316.8 L714.6 319.4 L712.4 321.7 L710.9 324.4 L709.7 327.4 L708.4 329.9 L708.1 332.8 L707.0 335.3 L705.8 337.9 L706.9 340.4 L706.5 343.2 L707.4 345.8 L707.6 348.5 L708.9 351.0 L709.6 353.6 L709.7 356.3 L711.3 358.6 L713.1 360.8 L715.2 362.6 L717.3 364.5 L719.2 366.5 L721.3 368.4 L723.9 369.8 L725.5 372.1 L727.7 373.9 L729.5 376.0 L732.3 376.7 L734.7 378.0 L736.9 379.7 L739.4 381.0 L741.5 382.9 L743.7 384.6 L746.5 385.2 L748.5 387.2 L750.9 388.6 L753.4 389.9 L756.3 390.4 L758.8 391.5 L761.0 393.2 L763.0 395.6 L764.6 398.2 L766.2 400.8 L767.2 403.8 L769.0 406.3 L769.2 409.3 L770.2 412.1 L771.6 414.8 L772.1 417.7 L773.2 420.5 L774.0 423.1 L776.2 425.0 L776.6 427.9 L777.4 430.4 L778.8 432.8 L780.0 435.2 L781.6 437.4 L783.0 439.8 L784.8 442.0 L785.4 444.9 L787.4 447.0 L788.2 449.8 L790.0 452.0 L791.6 454.6 L794.3 455.9 L796.4 457.9 L797.9 460.6 L800.5 462.1 L802.3 464.0 L804.9 464.9 L807.0 466.5 L809.1 468.1 L810.4 470.7 L812.5 472.2 L815.2 472.9 L816.6 475.4 L819.0 476.6 L821.0 478.8 L823.7 479.8 L826.4 480.9 L828.7 482.7 L831.5 483.6 L834.0 484.9 L836.0 487.1 L838.9 487.6 L841.6 486.9 L844.4 486.5 L847.3 486.9 L850.0 485.9 L852.8 486.3 L855.6 486.0 L858.4 485.3 L861.2 484.7 L864.0 484.7 L866.9 484.6 L869.7 484.4 L872.5 484.9 L875.4 484.2 L878.2 484.5 L880.0 486.6 L882.1 488.5 L883.4 491.0 L881.1 492.7 L879.9 495.4 L877.9 497.4 L875.9 499.4 L874.2 501.6 L873.6 504.7 L874.3 507.7 L874.2 510.8 L876.6 512.4 L879.5 512.8 L882.1 513.8 L884.7 514.8 L887.7 515.0 L890.1 516.6 L892.8 517.2 L895.3 518.7 L898.2 519.0 L900.3 521.3 L903.2 521.4 L905.6 522.9 L908.0 524.4 L910.7 525.2 L913.4 525.9 L915.8 527.3 L918.4 528.4 L921.0 529.4 L923.6 531.1 L926.7 531.3 L929.2 533.2 L932.1 534.0 L934.7 535.6 L937.1 536.8 L938.9 539.0 L941.3 540.1 L943.4 541.7 L945.7 543.1 L948.3 544.3 L951.0 545.3 L953.9 545.4 L956.6 546.4 L959.3 547.0 L962.1 547.8 L964.8 548.6 L966.4 550.8 L968.5 552.6 L970.3 554.7 L972.4 556.4 L974.7 558.0 L976.4 560.2 L978.8 561.5 L981.2 562.9 L982.9 565.1 L984.8 566.9 L987.6 567.8 L989.4 569.8 L990.5 572.2 L991.2 574.9 L992.5 577.2 L994.2 579.3 L993.4 583.0 L991.5 586.2 L991.6 589.2 L990.5 592.0 L990.6 595.0 L989.4 597.8 L986.6 597.5 L983.8 597.1 L981.2 595.8 L978.6 593.7 L976.0 591.8 L973.0 590.3 L972.6 586.7 L971.0 583.4 L969.3 581.3 L968.9 578.5 L967.6 576.2 L966.2 573.9 L962.9 573.8 L959.9 571.9 L956.6 571.8 L953.9 571.1 L951.2 572.2 L948.4 571.1 L945.7 571.8 L943.2 570.9 L940.9 569.8 L938.8 568.0 L936.1 567.7 L934.7 563.6 L932.1 562.4 L929.2 562.2 L926.8 564.7 L923.8 566.4 L921.0 568.4 L919.6 571.1 L918.5 574.0 L917.4 576.8 L915.6 579.3 L914.5 582.2 L912.5 584.6 L912.1 587.9 L910.0 590.3 L909.3 593.3 L908.8 596.3 L908.8 599.5 L907.6 602.4 L906.7 605.3 L907.4 608.1 L908.5 610.8 L909.4 613.5 L912.2 613.5 L914.3 615.6 L917.0 616.0 L919.7 616.3 L922.4 618.8 L925.8 620.0 L928.9 621.0 L931.5 622.8 L934.4 624.1 L936.8 626.3 L936.4 629.5 L937.2 632.6 L937.4 635.8 L936.8 639.0 L938.2 642.1 L938.9 645.5 L940.8 648.4 L938.4 650.9 L936.8 654.0 L933.7 654.6 L930.6 655.0 L927.4 654.7 L924.9 655.7 L923.1 657.8 L920.9 659.2 L919.3 661.6 L917.2 663.2 L914.7 664.2 L914.4 666.8 L914.8 669.5 L914.7 672.1 L915.8 674.8 L914.8 677.8 L915.7 680.5 L916.3 683.2 L914.0 684.8 L912.8 687.6 L910.0 688.6 L908.4 691.0 L907.0 693.8 L904.0 695.4 L902.5 698.2 L900.5 700.5 L900.1 703.1 L899.2 705.6 L898.0 708.0 L898.4 710.7 L897.4 713.2 L895.0 714.8 L892.1 715.2 L889.5 716.3 L886.3 716.5 L883.1 716.4 L880.0 715.5 L877.2 713.1 L875.3 710.0 L874.4 707.3 L874.4 704.5 L874.4 701.8 L874.5 699.0 L877.3 697.6 L880.4 697.3 L883.2 695.8 L883.3 692.9 L884.1 690.1 L884.1 687.2 L884.8 684.4 L885.5 681.6 L883.3 678.8 L882.4 675.3 L884.9 672.6 L887.9 670.5 L890.4 669.2 L893.2 669.9 L895.8 669.0 L896.7 665.9 L896.9 662.5 L898.2 659.5 L896.3 656.9 L895.0 653.8 L892.6 651.6 L891.2 649.0 L891.5 645.9 L890.2 643.3 L889.5 640.5 L888.7 637.8 L888.4 634.9 L886.9 632.3 L886.3 629.5 L884.5 627.1 L883.0 624.6 L881.6 621.9 L879.2 620.0 L878.2 617.4 L878.3 614.6 L877.4 612.0 L876.6 609.4 L875.5 606.9 L874.7 604.3 L874.2 601.6 L872.3 599.3 L871.1 596.6 L869.7 594.0 L869.0 591.0 L866.2 591.7 L863.9 593.5 L861.3 594.7 L858.7 595.9 L855.8 596.3 L853.4 594.5 L850.8 593.1 L848.0 592.1 L845.3 591.0 L842.8 590.0 L840.3 588.8 L838.0 587.4 L835.7 585.9 L833.4 584.5 L833.2 581.5 L834.0 578.5 L834.0 575.5 L834.7 572.6 L833.1 570.0 L831.0 567.9 L828.5 566.2 L826.0 564.5 L824.2 562.1 L821.4 561.9 L819.0 563.5 L816.4 564.0 L813.9 565.1 L811.1 565.1 L808.4 565.5 L805.8 566.0 L807.5 563.8 L808.9 561.4 L811.0 559.5 L808.4 558.6 L805.5 558.5 L803.0 557.2 L800.3 556.6 L797.9 555.2 L795.3 554.2 L793.4 551.9 L792.1 549.3 L791.3 546.4 L790.0 543.8 L789.3 541.0 L787.9 538.4 L786.4 536.3 L785.1 534.0 L783.4 531.9 L781.6 530.0 L778.4 530.2 L775.2 530.5 L772.2 531.7 L769.0 532.1 L766.3 532.1 L763.8 530.8 L761.0 531.9 L758.5 530.7 L755.8 530.6 L753.1 531.3 L750.6 529.7 L747.9 530.0 L745.9 527.9 L743.3 526.7 L741.0 525.0 L738.7 523.3 L735.8 522.6 L733.7 520.5 L731.4 519.0 L729.0 517.4 L727.2 515.4 L725.1 513.8 L723.0 512.2 L720.6 510.9 L718.8 509.0 L716.5 507.6 L714.4 506.0 L712.1 504.7 L709.6 501.8 L707.9 498.4 L705.3 497.2 L703.3 495.4 L701.5 493.3 L699.1 491.9 L697.7 489.2 L695.3 487.9 L693.7 485.7 L692.1 483.6 L690.4 481.5 L688.7 479.3 L686.8 477.4 L684.7 475.3 L682.0 473.8 L680.8 470.8 L678.4 469.0 L675.5 468.6 L672.5 469.0 L669.6 468.9 L666.6 468.7 L663.7 469.0 L666.8 466.8 L664.9 464.5 L664.5 461.4 L662.5 459.1 L661.6 456.3 L658.7 455.2 L656.4 453.3 L654.2 451.0 L651.3 450.1 L649.0 448.0 L648.3 445.2 L647.6 442.4 L645.8 440.1 L644.7 437.4 L641.5 436.9 L638.4 436.0 L635.3 435.3 L635.6 432.5 L635.7 429.7 L635.5 426.9 L635.5 424.0 L634.6 421.2 L635.3 418.4 L633.3 416.2 L632.0 413.6 L631.2 410.6 L629.1 408.5 L627.9 405.8 L627.4 402.8 L625.9 400.0 L625.3 397.1 L625.0 394.0 L624.7 391.0 L623.7 388.4 L622.5 386.0 L621.3 383.5 L619.5 381.3 L618.6 378.7 L617.4 376.3 L613.7 375.6 L610.0 374.7 L607.9 372.6 L605.4 370.9 L604.1 368.0 L601.3 366.6 L599.5 364.2 L597.2 362.2 L594.5 360.9 L591.2 360.9 L588.9 359.0 L586.5 357.2 L584.0 355.6 L581.0 355.0 L578.4 354.7 L575.7 354.6 L573.0 354.3 L570.6 352.8 L567.8 353.6 L565.2 352.6 L562.6 352.4 L560.7 354.5 L558.1 355.7 L555.4 356.9 L553.9 359.6 L551.0 360.4 L549.0 362.5 L546.8 364.2 L544.5 366.1 L542.8 368.5 L541.5 371.2 L538.8 372.8 L537.5 375.5 L536.2 378.2 L533.7 380.0 L531.6 381.8 L528.8 382.3 L526.4 383.5 L524.1 384.8 L521.7 386.2 L519.1 387.0 L516.6 387.9 L513.2 386.9 L510.0 385.3 L511.6 382.9 L511.5 379.7 L513.7 377.6 L514.9 375.0 L514.9 371.9 L516.6 369.5 L513.8 368.3 L510.9 368.1 L508.0 367.2 L504.9 367.7 L502.1 366.8 L499.4 366.0 L496.8 364.9 L494.5 362.9 L491.7 362.5 L489.0 361.6 L488.1 359.0 L487.6 356.4 L486.7 353.8 L485.6 351.2 L485.0 348.6 L485.0 345.8 L486.5 343.4 L486.7 340.4 L488.7 338.2 L489.0 335.3 L487.1 333.3 L485.6 331.1 L484.4 328.7 L482.4 326.8 L481.1 324.4 L479.7 322.1 L479.4 318.9 L478.3 316.0 L477.2 313.1 L475.8 310.3 L478.2 309.2 L480.6 308.2 L482.9 306.9 L484.9 305.1 L487.3 304.0 L489.0 301.7 L491.6 301.0 L492.6 298.1 L492.8 295.1 L493.9 292.2 L494.2 289.2 L492.5 287.2 L490.3 285.8 L488.2 284.2 L487.3 281.4 L485.0 280.0 L483.8 277.0 L483.8 273.9Z"/><path d="M540.0 543.5 L542.5 544.5 L542.0 547.3 L541.0 550.0 L540.6 553.1 L539.5 556.0 L537.7 557.8 L540.8 558.8 L543.8 559.8 L547.2 559.4 L550.3 560.4 L553.1 559.3 L555.6 557.4 L558.4 556.4 L561.0 554.8 L563.8 553.6 L565.4 551.2 L567.5 549.2 L569.5 547.2 L572.3 546.0 L573.9 543.5 L575.9 541.0 L577.5 538.2 L579.8 536.0 L582.5 535.7 L585.1 535.0 L587.4 533.4 L589.1 535.9 L591.2 538.1 L592.8 540.7 L594.1 543.5 L596.4 546.0 L597.7 549.0 L599.2 552.0 L601.4 553.8 L602.9 556.2 L604.2 558.7 L604.3 562.1 L603.6 565.4 L603.4 568.8 L603.9 571.6 L605.1 574.0 L606.7 576.3 L607.6 578.9 L606.4 581.7 L604.8 584.3 L603.7 587.1 L602.4 589.8 L600.8 592.4 L602.1 595.2 L602.4 598.2 L602.0 601.4 L603.4 604.2 L603.7 607.0 L602.7 609.6 L602.2 612.4 L601.5 615.0 L602.2 617.9 L601.8 620.6 L601.5 623.3 L600.8 626.0 L600.7 628.8 L600.3 631.5 L599.2 634.2 L599.0 637.0 L598.7 639.8 L599.8 642.7 L599.4 645.4 L598.1 648.1 L597.5 650.8 L597.8 653.6 L597.5 656.4 L594.6 655.8 L591.5 656.3 L588.6 655.3 L585.7 654.7 L583.0 654.9 L580.5 655.9 L577.9 656.6 L575.6 658.0 L573.8 660.6 L573.7 663.8 L572.2 666.5 L570.5 668.7 L568.3 670.3 L565.9 671.5 L563.8 673.2 L561.1 672.3 L558.3 671.4 L555.4 671.5 L553.7 668.5 L551.7 665.8 L549.5 663.1 L548.6 660.4 L546.9 658.1 L545.7 655.5 L544.4 653.0 L543.8 650.3 L545.2 647.6 L544.5 644.9 L545.8 642.2 L545.3 639.5 L545.9 636.9 L545.7 634.2 L545.8 631.5 L546.3 628.9 L547.3 626.3 L547.8 623.7 L547.8 621.0 L549.0 618.2 L551.2 616.0 L548.7 614.2 L547.3 611.4 L545.3 609.2 L547.1 605.9 L548.6 602.5 L547.9 599.8 L547.2 597.2 L547.3 594.4 L545.8 591.8 L546.1 589.0 L545.0 586.4 L544.4 583.6 L544.3 580.7 L543.0 578.1 L541.9 575.5 L539.6 574.1 L536.8 573.9 L534.3 573.0 L533.9 570.2 L533.9 567.5 L535.0 564.8 L534.3 562.0 L536.3 557.8 L536.9 555.2 L536.5 552.6 L537.0 550.0 L537.8 546.4Z"/><path d="M872.4 696.5 L871.0 699.4 L869.3 702.1 L868.2 705.1 L866.7 707.9 L866.0 710.7 L864.3 713.2 L862.9 715.7 L862.8 718.9 L862.0 721.7 L860.5 724.2 L859.2 726.8 L858.4 729.4 L857.0 731.8 L856.8 734.6 L855.0 736.8 L854.1 739.3 L853.5 742.0 L853.5 744.9 L854.0 747.7 L852.7 750.5 L853.5 753.4 L855.6 755.1 L856.9 757.5 L859.2 759.0 L860.1 762.7 L860.1 766.6 L862.3 768.7 L863.9 771.4 L862.1 773.8 L861.3 776.8 L859.0 778.9 L858.2 781.8 L857.6 785.0 L857.4 788.2 L856.3 791.3 L853.2 791.3 L850.1 790.5 L847.1 789.6 L844.0 789.4 L841.4 787.8 L838.2 788.0 L835.4 786.7 L832.5 786.0 L830.1 783.9 L827.0 783.7 L824.6 781.5 L822.6 779.1 L821.3 776.1 L818.1 775.3 L815.5 773.4 L813.0 771.3 L809.9 770.4 L806.9 769.4 L803.9 769.3 L800.9 768.5 L797.8 768.2 L794.7 768.5 L792.3 767.2 L789.9 765.9 L788.3 763.4 L785.9 762.2 L783.4 761.0 L780.5 760.1 L778.5 757.6 L775.7 756.4 L773.2 754.8 L770.6 753.3 L768.2 751.5 L765.2 751.1 L762.2 750.4 L759.5 749.0 L756.8 747.7 L753.7 747.4 L750.9 745.8 L747.6 746.6 L744.9 744.7 L741.7 744.8 L739.1 743.5 L736.8 741.7 L734.9 739.4 L732.2 738.2 L732.0 735.2 L730.7 732.5 L729.4 729.8 L729.4 726.8 L730.6 723.7 L731.7 720.5 L733.2 717.4 L735.7 716.3 L737.1 713.7 L739.4 712.2 L741.7 710.7 L743.2 713.0 L746.0 714.0 L747.5 716.3 L749.3 718.3 L751.5 716.8 L753.4 714.8 L754.4 712.1 L756.3 710.2 L758.7 708.8 L761.4 707.5 L764.6 708.3 L767.3 707.0 L769.9 709.1 L772.0 711.7 L774.4 713.3 L776.8 714.8 L779.6 715.5 L782.8 716.5 L786.0 717.7 L789.0 719.3 L791.8 719.4 L794.4 718.3 L796.9 717.2 L799.7 717.3 L802.3 716.4 L805.3 715.9 L808.4 715.7 L811.4 715.1 L814.5 716.1 L817.5 715.5 L820.3 714.8 L822.6 713.2 L825.4 712.3 L827.2 709.8 L829.9 708.8 L832.6 707.9 L835.4 707.1 L838.5 707.2 L841.3 706.4 L844.0 705.0 L846.6 703.9 L849.2 702.7 L851.9 702.1 L854.6 701.2 L857.3 700.3 L860.5 700.2 L863.2 698.3 L866.5 698.5 L869.5 697.6Z"/><path d="M618.0 446.0 L620.3 444.6 L622.0 442.5 L624.9 443.7 L628.0 444.0 L632.0 441.5 L633.0 446.0 L631.4 448.4 L630.0 451.0 L627.0 450.8 L624.0 450.0 L621.0 450.0 L618.0 449.5Z"/><ellipse cx="710.4" cy="791.3" rx="3.5" ry="2.6" transform="rotate(30 710.4 791.3)"/><path d="M537 655L541.5 651.5L543 658L538.5 660Z"/><path d="M543 661L547.5 660L549 667L545 669Z"/><circle cx="606.4" cy="432" r="1.04" stroke-width="0.7"/><circle cx="617.4" cy="457.4" r="0.91" stroke-width="0.7"/><circle cx="627.5" cy="472.7" r="1.04" stroke-width="0.7"/><circle cx="653.2" cy="471" r="1.17" stroke-width="0.7"/><circle cx="661.6" cy="476.3" r="0.91" stroke-width="0.7"/><circle cx="609.4" cy="409.6" r="0.80" stroke-width="0.7"/><circle cx="787.4" cy="559.5" r="1.49" stroke-width="0.7"/><circle cx="802.6" cy="569.5" r="1.04" stroke-width="0.7"/><circle cx="740" cy="550" r="0.91" stroke-width="0.7"/><circle cx="746" cy="549" r="0.91" stroke-width="0.7"/><circle cx="749" cy="552" r="0.80" stroke-width="0.7"/><circle cx="851.8" cy="474" r="0.80" stroke-width="0.7"/><circle cx="862.4" cy="468.7" r="0.80" stroke-width="0.7"/><circle cx="853.2" cy="668.2" r="1.04" stroke-width="0.7"/><circle cx="847.6" cy="677.6" r="0.80" stroke-width="0.7"/><circle cx="836.6" cy="683.2" r="1.30" stroke-width="0.7"/><circle cx="841.3" cy="687" r="1.30" stroke-width="0.7"/><circle cx="842" cy="691" r="1.17" stroke-width="0.7"/><circle cx="824" cy="683.2" r="0.80" stroke-width="0.7"/><circle cx="760.6" cy="678.5" r="0.85" stroke-width="0.7"/><circle cx="711.4" cy="723" r="0.98" stroke-width="0.7"/><circle cx="722.7" cy="725" r="1.30" stroke-width="0.7"/><circle cx="754" cy="843.4" r="0.80" stroke-width="0.7"/><circle cx="740" cy="862" r="0.80" stroke-width="0.7"/><circle cx="591" cy="533" r="0.80" stroke-width="0.7"/><circle cx="594" cy="536.5" r="0.80" stroke-width="0.7"/><circle cx="596.5" cy="540" r="0.80" stroke-width="0.7"/><circle cx="599" cy="546" r="0.80" stroke-width="0.7"/><circle cx="601.5" cy="550" r="0.80" stroke-width="0.7"/></g><g fill="none" stroke="#3a3226" stroke-width="1" stroke-linejoin="round"><path d="M525.8 264.2 L526.2 266.4 L525.5 268.6 L527.1 270.7 L527.0 272.9 L526.0 275.2 L527.2 277.3 L527.7 279.5 L527.9 281.6 L527.1 283.9 L525.1 283.9 L523.1 284.6 L521.0 283.4 L519.0 283.7 L516.9 283.7 L515.1 285.3 L513.0 285.0 L511.1 286.3 L509.0 286.8 L506.7 286.4 L504.5 286.4 L502.6 287.4 L500.6 288.3 L498.4 288.4 L496.2 288.5 L494.2 289.2"/><path d="M561.3 256.3 L560.0 258.1 L558.9 260.0 L557.7 261.9 L557.4 264.2 L556.4 266.3 L556.8 268.8 L554.7 270.6 L555.1 273.1 L553.9 275.2 L553.4 277.4 L554.5 279.3 L554.6 281.5 L556.5 283.1 L557.2 285.1 L558.0 287.1 L559.0 289.0 L558.4 291.5 L560.0 293.2 L561.9 295.3 L564.0 297.1 L562.2 298.4 L560.1 299.2 L557.5 299.1 L556.0 301.0 L555.3 303.0 L555.2 305.2 L553.4 306.8 L553.4 309.0 L554.7 311.0 L555.7 313.2 L558.6 313.7 L559.6 316.0 L560.6 318.2 L562.6 319.5 L563.9 321.4 L565.6 322.8 L568.5 322.7 L569.9 324.4 L571.9 325.4 L573.2 327.4 L575.0 328.8 L575.0 331.5 L577.0 332.8 L577.7 334.9 L579.9 336.0 L581.0 337.9 L579.7 340.5"/><path d="M579.7 340.5 L577.6 339.1 L575.1 339.3 L572.7 339.0 L570.5 337.9 L568.5 339.1 L566.6 340.5 L566.2 343.4 L564.0 344.5 L562.0 344.3 L560.0 344.2 L558.0 345.1 L556.0 344.8 L554.0 345.3 L552.0 344.5 L550.4 345.8 L548.5 346.5 L546.4 346.5 L544.5 347.2 L542.9 348.8 L541.2 349.9 L539.0 349.7 L538.6 351.9 L537.1 353.7 L537.3 356.1 L536.3 358.1 L535.8 360.3 L533.9 361.9 L533.7 364.2 L531.7 365.4 L530.3 367.6 L528.2 368.9 L525.8 369.5 L523.5 369.7 L521.2 369.4 L518.9 369.2 L516.6 369.5"/><path d="M579.7 340.5 L579.4 338.3 L580.1 336.4 L581.7 334.7 L581.7 332.5 L582.0 330.5 L582.6 328.5 L584.5 326.9 L583.7 324.6 L584.8 322.8 L584.9 320.7 L585.6 318.7 L586.3 316.8 L588.5 316.9 L590.6 316.5 L592.1 314.6 L594.0 313.6 L596.3 314.0 L598.0 312.3 L599.8 311.3 L602.1 311.6 L603.8 313.1 L606.1 312.7 L607.8 314.2 L610.0 314.2 L612.1 315.0 L613.6 316.9 L616.0 317.1 L618.2 317.5 L620.3 318.2 L621.8 320.1 L623.7 321.3 L625.8 322.0 L628.0 322.6 L629.8 320.6 L632.0 321.4 L633.9 320.6 L636.0 320.6 L638.0 319.6 L640.0 319.6 L642.2 319.8 L644.2 319.5 L646.0 320.7 L648.3 319.3 L650.1 320.5 L652.0 321.4 L653.9 322.1 L656.2 320.8 L658.2 321.0 L660.0 322.1 L662.3 322.5 L664.4 322.0 L666.3 320.5 L668.2 319.1 L670.5 319.5"/><path d="M628.4 228.7 L629.0 231.2 L631.2 232.5 L631.7 235.1 L633.7 236.6 L633.1 238.8 L632.4 240.9 L633.5 243.3 L631.9 245.3 L632.8 247.6 L632.1 249.8 L630.9 251.8 L630.6 254.0 L631.0 256.3 L632.4 258.1 L633.1 260.2 L633.5 262.4 L634.0 264.6 L635.0 266.6 L636.3 268.5 L636.3 270.8 L638.4 270.6 L640.2 271.9 L642.1 272.6 L644.2 272.1 L644.2 274.5 L642.3 276.0 L641.1 277.8 L641.6 280.4 L639.2 281.7 L639.0 284.0 L640.2 285.9 L639.5 288.2 L640.0 290.2 L640.2 292.3 L641.3 294.2 L641.4 296.3 L641.6 298.4 L643.0 300.0 L644.7 301.3 L645.8 303.2 L647.6 304.4 L649.1 305.9 L651.2 306.8 L652.0 309.0 L653.6 310.4 L655.6 311.3 L657.6 312.0 L658.8 314.1 L660.6 315.3 L662.7 315.9 L664.8 316.6 L666.3 318.3 L668.0 319.5 L670.5 319.5"/><path d="M644.2 272.1 L646.6 272.1 L648.7 272.9 L650.6 274.3 L652.9 274.4 L654.7 276.0 L655.7 274.1 L656.8 272.3 L657.0 270.0 L659.2 268.8 L660.0 266.8 L661.2 264.8 L663.8 264.6 L665.6 263.4 L667.0 261.6 L668.2 259.5 L670.5 259.0 L672.4 257.9 L674.1 256.5 L676.6 256.4 L677.6 253.8 L680.3 253.9 L682.4 253.0 L683.7 251.0 L684.4 249.0 L684.8 247.0 L683.8 244.8 L685.7 243.0 L684.9 240.9 L686.1 238.9 L686.2 236.9 L684.9 234.7 L686.4 232.8 L687.0 230.8 L686.3 228.7 L687.5 226.7 L689.6 225.8 L691.9 225.2 L692.9 222.9 L695.6 222.8 L696.8 220.8 L699.0 220.0 L701.5 220.7 L703.6 219.0 L706.1 219.4 L708.4 219.0"/><path d="M719.0 220.0 L717.1 221.3 L717.2 223.9 L716.0 225.7 L714.4 227.2 L713.6 229.2 L713.0 231.3 L711.0 232.6 L710.6 235.0 L709.6 237.2 L707.1 238.6 L706.5 240.9 L705.8 243.2 L706.4 245.6 L709.0 246.7 L709.2 249.4 L711.0 251.0 L711.8 253.0 L710.9 255.0 L710.7 257.0 L711.0 259.0 L712.9 260.1 L714.1 262.2 L716.2 263.0 L718.0 264.3 L719.4 266.1 L721.6 266.8 L724.0 266.0 L726.3 267.8 L728.7 267.1 L731.0 266.6 L733.4 266.8 L733.6 269.1 L735.5 270.9 L734.8 273.5 L736.4 275.3 L737.4 277.4"/><path d="M670.5 319.5 L672.8 319.2 L675.0 320.1 L677.3 319.4 L679.5 318.8 L681.8 320.0 L684.0 318.6 L686.3 319.5 L688.6 320.0 L690.7 318.6 L693.0 319.2 L695.2 319.8 L697.4 318.8 L699.6 318.7 L701.8 318.2 L703.4 319.5 L705.2 320.6 L706.5 322.2 L707.6 323.9 L708.2 326.0 L709.7 327.4"/><path d="M579.7 340.5 L581.5 341.5 L583.1 342.7 L584.4 344.5 L587.0 344.2 L588.6 345.4 L590.0 347.0 L591.9 348.0 L594.3 347.4 L596.4 348.0 L598.2 349.4 L600.3 349.5 L602.1 351.0"/><path d="M602.1 351.0 L602.6 353.2 L603.1 355.3 L602.6 357.6 L602.8 359.8 L603.8 361.9 L603.4 364.2 L604.3 366.1 L605.6 367.7 L607.3 369.0 L607.0 371.7 L609.4 372.7 L610.0 374.7"/><path d="M602.1 351.0 L604.2 350.3 L606.3 350.2 L608.4 351.3 L610.5 351.8 L612.6 351.0 L614.0 352.7 L616.2 353.2 L618.1 354.1 L620.2 354.9 L621.2 357.1 L623.1 358.2 L625.1 359.0 L626.5 360.7 L628.4 361.6 L630.4 362.5 L631.9 364.4 L634.1 365.0 L636.5 365.1 L637.9 367.3 L640.7 366.7 L642.2 368.6 L644.2 369.5 L646.4 369.1 L648.7 368.6 L650.9 368.0 L653.3 369.3 L655.4 367.6 L657.8 368.5 L660.0 368.2 L662.5 368.4 L664.2 366.1 L666.4 365.6 L668.9 365.8 L671.0 364.9 L673.2 364.2 L674.9 365.6 L676.6 367.1 L679.2 367.1 L680.9 368.5 L682.6 370.0 L683.5 372.0 L684.6 374.0 L683.4 376.5 L684.7 378.4 L686.1 380.3 L688.0 381.6 L690.6 381.8 L691.3 384.6 L693.2 385.8 L695.3 386.8 L697.4 387.3 L699.4 388.4 L701.6 388.4 L703.7 389.0 L705.9 388.7 L708.0 388.7 L710.1 389.2 L712.1 390.0"/><path d="M712.1 390.0 L713.1 388.0 L715.1 387.3 L717.2 386.7 L718.7 385.4 L720.5 384.4 L721.6 382.6 L723.2 381.2 L723.8 379.0 L725.6 377.7 L726.8 376.0 L729.5 376.0"/><path d="M712.1 390.0 L711.2 391.9 L709.5 393.4 L708.9 395.5 L707.9 397.4 L706.1 399.2 L703.5 400.0 L701.6 401.6 L700.2 403.5 L701.3 405.9 L699.6 407.7 L700.9 410.2 L699.5 412.1 L701.8 412.7 L704.0 413.7 L705.8 415.3 L703.8 416.4 L701.8 417.5 L700.4 419.3 L699.3 421.4 L697.4 422.6 L696.3 424.6 L697.1 426.9 L696.9 429.0 L695.2 430.9 L695.4 433.1 L695.3 435.3 L695.2 437.5 L695.6 439.6 L696.3 441.6 L693.6 441.3 L691.5 443.1 L689.0 443.7"/><path d="M689.0 443.7 L688.8 445.9 L689.6 447.9 L689.8 450.1 L691.0 452.0 L689.5 453.7 L687.5 454.9 L686.2 456.7 L684.7 458.4 L684.4 460.6 L683.9 462.8 L682.6 464.7 L681.0 466.0 L680.4 468.2 L678.4 469.0"/><path d="M691.0 448.0 L692.8 449.8 L695.6 449.3 L697.8 450.1 L699.5 452.0 L701.8 451.6 L703.5 453.8 L705.9 453.0 L708.1 453.0 L710.0 454.2 L712.2 455.8 L713.6 457.9 L714.2 460.5 L715.6 462.1 L717.4 463.2 L719.0 464.6 L720.6 465.9 L722.6 466.8 L723.2 464.6 L725.3 463.6 L726.2 461.6 L728.3 460.5 L729.0 458.4 L731.4 458.0 L733.6 457.0 L734.9 454.4 L737.4 454.2 L739.7 454.2 L741.9 453.6 L744.0 453.0 L745.5 450.6 L747.7 450.1 L750.0 450.0 L751.5 447.3 L754.2 445.8"/><path d="M710.0 397.0 L712.3 397.0 L713.5 399.4 L715.4 400.2 L717.5 400.8 L719.2 402.0 L721.3 402.5 L723.5 402.8 L725.6 403.3 L727.5 404.2 L729.0 405.8 L728.8 408.0 L730.3 409.9 L730.4 412.0 L730.5 414.2 L731.7 416.1 L731.0 418.4 L732.3 420.0 L733.0 421.9 L733.0 424.1 L734.5 425.7 L735.3 427.5 L734.9 429.9 L736.6 431.4 L737.4 433.2 L738.9 434.8 L740.9 435.2 L743.2 435.0 L744.7 436.6 L746.5 437.6 L747.9 439.1 L750.0 439.5 L751.7 441.4 L752.4 443.9 L754.2 445.8"/><path d="M754.2 445.8 L755.9 444.6 L757.2 442.8 L759.7 442.6 L760.4 440.1 L762.6 439.5 L764.9 439.6 L766.7 437.8 L768.7 436.9 L770.9 436.8 L773.3 437.4 L775.5 437.3 L777.1 434.8 L779.5 435.3 L781.6 437.4"/><path d="M754.2 445.8 L755.6 447.9 L757.0 449.9 L758.4 452.0 L756.3 452.8 L755.4 455.1 L753.4 455.8 L751.9 457.4 L750.0 458.4 L749.9 460.7 L751.7 462.5 L750.9 465.0 L752.8 466.7 L753.6 468.8 L753.2 471.2 L754.2 473.2 L755.3 475.3 L756.3 477.4 L754.5 479.0 L752.0 478.8 L750.3 480.7 L747.7 480.2 L745.8 481.6 L746.5 483.9 L747.4 486.1 L748.7 488.0 L750.0 490.0 L751.9 490.6 L753.7 491.6 L755.5 492.5 L756.8 494.3 L759.4 493.7 L760.4 496.1 L762.6 496.3 L764.8 496.1 L766.6 497.1 L768.4 497.9 L769.8 499.9 L772.0 499.8 L774.0 500.3 L775.5 502.0 L777.8 501.4 L779.5 502.6 L781.5 502.9 L783.4 503.5 L785.3 504.3 L787.4 504.2"/><path d="M787.4 504.2 L789.4 503.1 L790.9 501.5 L792.1 499.5 L793.7 498.0 L795.1 496.3 L797.7 495.9 L799.1 494.1 L800.5 492.4 L802.4 493.7 L804.9 493.3 L806.8 494.6 L808.7 496.1 L811.0 496.3 L812.5 494.6 L813.0 492.2 L814.9 490.8 L817.0 489.5 L817.2 486.9 L818.4 485.0 L819.9 483.4 L821.6 481.8"/><path d="M787.4 504.2 L787.2 506.4 L787.1 508.7 L788.8 510.7 L789.0 512.9 L789.0 515.1 L788.7 517.4 L788.1 519.4 L786.8 521.1 L786.5 523.3 L785.3 525.0 L784.6 527.1 L782.2 528.2 L782.1 530.5"/><path d="M788.7 517.4 L791.1 516.9 L792.8 514.8 L795.3 514.7 L797.1 516.2 L799.6 515.1 L801.5 516.2 L803.2 518.0 L805.4 518.2 L807.4 518.7 L809.6 518.7 L811.8 518.8 L813.7 520.0 L815.7 519.5 L817.1 517.7 L819.0 517.1 L821.0 516.6 L822.5 515.2 L824.7 515.1 L826.8 515.0 L828.6 514.1 L830.3 512.9 L832.1 512.1"/><path d="M821.6 481.8 L823.5 483.0 L825.7 483.6 L828.1 483.9 L829.7 485.8 L832.0 486.3 L833.7 487.9 L836.0 488.4 L835.4 490.7 L836.6 492.8 L836.5 495.0 L836.4 497.3 L837.3 499.4 L837.4 501.6 L836.5 503.9 L834.4 505.3 L832.8 507.1 L832.1 509.5 L832.1 512.1"/><path d="M832.1 512.1 L833.0 514.2 L834.4 515.9 L835.5 517.8 L837.1 519.3 L838.4 521.0 L840.0 522.6 L841.1 524.7 L842.5 526.7 L842.9 529.1 L845.0 530.7 L845.3 533.2 L847.5 533.5 L849.6 534.6 L851.8 534.9 L854.0 535.2 L856.3 534.9 L858.4 535.8"/><path d="M858.4 535.8 L857.5 538.0 L856.4 540.0 L855.1 542.0 L854.4 544.3 L853.2 546.3 L852.8 548.4 L852.3 550.5 L853.9 552.6 L852.9 554.7 L853.2 556.8 L854.1 558.8 L856.0 560.0 L857.2 561.7 L857.7 564.0 L860.5 564.4 L861.0 566.8 L862.9 567.9 L863.7 570.0 L864.3 572.2 L865.2 574.2 L867.1 575.7 L868.9 577.1 L869.2 579.5 L870.4 581.4 L871.6 583.2 L870.6 585.2 L870.5 587.4 L869.8 589.4 L868.8 591.4 L869.0 593.7"/><path d="M858.4 535.8 L860.4 535.2 L862.3 534.3 L864.6 534.7 L866.1 532.6 L868.4 532.9 L870.2 531.6 L872.4 531.7 L874.2 530.5 L876.1 532.2 L875.6 535.2 L877.9 536.7 L879.7 538.4 L880.0 541.0 L882.1 540.9 L884.1 541.5 L886.3 541.0 L888.2 542.4 L889.7 543.8 L891.1 545.2 L892.0 547.1 L893.9 548.1 L895.4 549.4 L896.9 550.8 L897.8 552.7 L899.9 552.6 L901.9 552.5 L903.6 551.1 L905.3 549.9 L907.4 549.9 L909.2 551.5 L911.5 552.0 L912.1 554.3 L912.8 556.5 L913.3 558.7 L912.3 561.2 L912.5 563.5 L913.5 565.7 L915.4 567.1 L917.7 567.9 L919.7 569.1"/><path d="M871.6 596.3 L873.7 596.5 L875.8 595.8 L877.9 597.3 L880.0 596.4 L882.0 597.5 L883.5 599.4 L885.5 600.5 L887.9 600.8 L890.2 600.5 L892.3 599.4 L894.6 598.7 L896.9 598.9 L899.2 598.5 L898.8 596.0 L900.7 594.0 L900.1 591.5 L901.5 589.3 L901.2 586.9 L903.6 586.2 L906.0 586.3 L908.4 585.9 L910.8 586.2"/></g><ellipse cx="716.3" cy="377.4" rx="1.8" ry="2.6" transform="rotate(25 716.3 377.4)" fill="#fff" stroke="#3a3226" stroke-width="0.8"/></svg>
<svg style="left:0;top:0" width="1692" height="950" viewBox="0 0 1692 950"><rect x="7" y="61" width="1" height="1" fill="#b8b8bb"/><rect x="10" y="61" width="1" height="1" fill="#b8b8bb"/><rect x="7" y="64" width="1" height="1" fill="#b8b8bb"/><rect x="10" y="64" width="1" height="1" fill="#b8b8bb"/><rect x="7" y="67" width="1" height="1" fill="#b8b8bb"/><rect x="10" y="67" width="1" height="1" fill="#b8b8bb"/><rect x="7" y="70" width="1" height="1" fill="#b8b8bb"/><rect x="10" y="70" width="1" height="1" fill="#b8b8bb"/><rect x="7" y="73" width="1" height="1" fill="#b8b8bb"/><rect x="10" y="73" width="1" height="1" fill="#b8b8bb"/><rect x="7" y="76" width="1" height="1" fill="#b8b8bb"/><rect x="10" y="76" width="1" height="1" fill="#b8b8bb"/><rect x="7" y="79" width="1" height="1" fill="#b8b8bb"/><rect x="10" y="79" width="1" height="1" fill="#b8b8bb"/><rect x="7" y="100" width="1" height="1" fill="#b8b8bb"/><rect x="10" y="100" width="1" height="1" fill="#b8b8bb"/><rect x="7" y="103" width="1" height="1" fill="#b8b8bb"/><rect x="10" y="103" width="1" height="1" fill="#b8b8bb"/><rect x="7" y="106" width="1" height="1" fill="#b8b8bb"/><rect x="10" y="106" width="1" height="1" fill="#b8b8bb"/><rect x="7" y="109" width="1" height="1" fill="#b8b8bb"/><rect x="10" y="109" width="1" height="1" fill="#b8b8bb"/><rect x="7" y="112" width="1" height="1" fill="#b8b8bb"/><rect x="10" y="112" width="1" height="1" fill="#b8b8bb"/><rect x="7" y="115" width="1" height="1" fill="#b8b8bb"/><rect x="10" y="115" width="1" height="1" fill="#b8b8bb"/><rect x="7" y="118" width="1" height="1" fill="#b8b8bb"/><rect x="10" y="118" width="1" height="1" fill="#b8b8bb"/><path d="M21.5 60.0H33L37.5 65.0V80.0H21.5Z" fill="#fff" stroke="#6b6b6b"/><path d="M33 60.0V65.0H37.5" fill="none" stroke="#6b6b6b"/><path d="M51.5 62.5H58L60 64.5H70.5V78.5H51.5Z" fill="#f0cc4a" stroke="#c8a030"/><path d="M51.5 78.5L54 67.5H74L71 78.5Z" fill="#f3d55b" stroke="#c8a030"/><rect x="86.5" y="59.5" width="19" height="20" rx="2" fill="#5a86c4" stroke="#4a6ea8"/><rect x="90" y="60" width="12" height="8" fill="#fff"/><path d="M91.5 62.5H100.5M91.5 64.5H100.5M91.5 66.5H100.5" stroke="#6a6a6a" stroke-width="0.8"/><rect x="90" y="72" width="12" height="7" fill="#f4f4f4"/><rect x="92" y="73.5" width="2" height="4" fill="#333"/><path d="M118.5 60.5H133L137.5 65.5V79.5H118.5Z" fill="#fff" stroke="#6b6b6b"/><path d="M133 60.5V65.5H137.5" fill="none" stroke="#6b6b6b"/><rect x="118.5" y="60.5" width="5" height="19" fill="#f3d55b" stroke="#b09030" stroke-width="0.8"/><rect x="118.5" y="60.5" width="12" height="4" fill="#f3d55b" stroke="#b09030" stroke-width="0.8"/><rect x="130" y="71" width="11" height="11" rx="1.5" fill="#c8ac2c"/><g stroke="#fff" stroke-width="1.2"><path d="M135.5 73V80M132 76.5H139M132.8 73.8L138.2 79.2M138.2 73.8L132.8 79.2"/></g><circle cx="135.5" cy="76.5" r="1.6" fill="#c8ac2c"/><path d="M151.0 60.5H165.5L170.0 65.5V79.5H151.0Z" fill="#fff" stroke="#6b6b6b"/><path d="M165.5 60.5V65.5H170.0" fill="none" stroke="#6b6b6b"/><rect x="152.5" y="62" width="14" height="16" fill="none" stroke="#b0a0d8" stroke-width="0.8"/><path d="M158 66a3 3 0 1 0 3 3L169 79" stroke="#b09a40" stroke-width="2.4" fill="none"/><path d="M156 67a3 3 0 1 0 4 -2" stroke="#7a7a7a" stroke-width="2" fill="none"/><circle cx="189.5" cy="64.5" r="4.3" fill="#c8502a"/><path d="M197 68L204 61" stroke="#5a86c4" stroke-width="2.2"/><rect x="185" y="71" width="8.5" height="8.5" fill="#7ab07e"/><text x="196" y="80" font-family="Liberation Sans" font-size="11" fill="#444">a</text><rect x="220" y="62" width="1" height="1" fill="#b8b8bb"/><rect x="223" y="62" width="1" height="1" fill="#b8b8bb"/><rect x="220" y="65" width="1" height="1" fill="#b8b8bb"/><rect x="223" y="65" width="1" height="1" fill="#b8b8bb"/><rect x="220" y="68" width="1" height="1" fill="#b8b8bb"/><rect x="223" y="68" width="1" height="1" fill="#b8b8bb"/><rect x="220" y="71" width="1" height="1" fill="#b8b8bb"/><rect x="223" y="71" width="1" height="1" fill="#b8b8bb"/><rect x="220" y="74" width="1" height="1" fill="#b8b8bb"/><rect x="223" y="74" width="1" height="1" fill="#b8b8bb"/><rect x="220" y="77" width="1" height="1" fill="#b8b8bb"/><rect x="223" y="77" width="1" height="1" fill="#b8b8bb"/><path d="M239 77C236 74 234 71 236 69C237.5 68 239 70 240 71V61C240 59 242.5 59 242.5 61V67V59.5C242.5 57.5 245.3 57.5 245.3 59.5V67V60.5C245.3 58.5 248 58.5 248 60.5V67V62.5C248 60.5 250.7 60.5 250.7 62.5V72C250.7 77 249 80.5 246 80.5H243C241 80.5 240.5 79 239 77Z" fill="#fff" stroke="#333" stroke-width="1.1"/><rect x="267" y="60" width="15" height="13" fill="#f3d55b" stroke="#b09030"/><path d="M277 58L281 62.5H279V68H284V66L288.5 70L284 74V72H279V77.5H281L277 81.5L273 77.5H275V72H270V74L265.5 70L270 66V68H275V62.5H273Z" fill="#5a86c4" stroke="#3a5f98" stroke-width="0.6"/><path d="M306.9 73.1L298.5 81.5" stroke="#555" stroke-width="4.2" stroke-linecap="round"/><path d="M306.5 73.5L298.9 81.1" stroke="#f3d55b" stroke-width="2.4" stroke-linecap="round"/><circle cx="312.5" cy="67.5" r="8" fill="#eeeef0" fill-opacity="0.9" stroke="#6a6a6a" stroke-width="1.2"/><path d="M312.5 63V72M308 67.5H317" stroke="#5a86c4" stroke-width="2.2"/><path d="M339.9 73.1L331.5 81.5" stroke="#555" stroke-width="4.2" stroke-linecap="round"/><path d="M339.5 73.5L331.9 81.1" stroke="#f3d55b" stroke-width="2.4" stroke-linecap="round"/><circle cx="345.5" cy="67.5" r="8" fill="#eeeef0" fill-opacity="0.9" stroke="#6a6a6a" stroke-width="1.2"/><path d="M341 67.5H350" stroke="#5a86c4" stroke-width="2.4"/><g fill="#5a86c4"><path d="M367 58H374L371.5 60.5L374.5 63.5L371.5 66.5L368.5 63.5L366 66Z"/><path d="M387 58H380L382.5 60.5L379.5 63.5L382.5 66.5L385.5 63.5L388 66Z"/><path d="M388 81H381L383.5 78.5L380.5 75.5L383.5 72.5L386.5 75.5L389 73Z"/></g><path d="M372.25 73.75L364.375 81.625" stroke="#555" stroke-width="4.2" stroke-linecap="round"/><path d="M371.875 74.125L364.75 81.25" stroke="#f3d55b" stroke-width="2.4" stroke-linecap="round"/><circle cx="377.5" cy="68.5" r="7.5" fill="#eeeef0" fill-opacity="0.9" stroke="#6a6a6a" stroke-width="1.2"/><rect x="398" y="61" width="9" height="14" fill="#f3d55b" stroke="#b09030"/><path d="M406.55 72.95L397.625 81.875" stroke="#555" stroke-width="4.2" stroke-linecap="round"/><path d="M406.125 73.375L398.05 81.45" stroke="#f3d55b" stroke-width="2.4" stroke-linecap="round"/><circle cx="412.5" cy="67" r="8.5" fill="#eeeef0" fill-opacity="0.9" stroke="#6a6a6a" stroke-width="1.2"/><path d="M410.5 62V72" stroke="#d8c890" stroke-width="1.2"/><rect x="432" y="61" width="9" height="13" fill="#f2f2f3" stroke="#8a8a8a"/><path d="M439.55 72.95L430.625 81.875" stroke="#555" stroke-width="4.2" stroke-linecap="round"/><path d="M439.125 73.375L431.05 81.45" stroke="#f3d55b" stroke-width="2.4" stroke-linecap="round"/><circle cx="445.5" cy="67" r="8.5" fill="#eeeef0" fill-opacity="0.9" stroke="#6a6a6a" stroke-width="1.2"/><path d="M445.5 61V73" stroke="#bdbdbf" stroke-width="1"/><rect x="466" y="61" width="6" height="12" fill="none" stroke="#d8d8da"/><path d="M471.55 72.95L462.625 81.875" stroke="#c8c8ca" stroke-width="4.2" stroke-linecap="round"/><path d="M471.125 73.375L463.05 81.45" stroke="#d8d8da" stroke-width="2.4" stroke-linecap="round"/><circle cx="477.5" cy="67" r="8.5" fill="#f4f4f5" fill-opacity="0.9" stroke="#cfcfd1" stroke-width="1.2"/><text x="471" y="71.5" font-family="Liberation Sans" font-weight="bold" font-size="9" fill="#d0d0d2">1:1</text><path d="M503.05 72.95L494.125 81.875" stroke="#555" stroke-width="4.2" stroke-linecap="round"/><path d="M502.625 73.375L494.55 81.45" stroke="#f3d55b" stroke-width="2.4" stroke-linecap="round"/><circle cx="509" cy="67" r="8.5" fill="#eeeef0" fill-opacity="0.9" stroke="#6a6a6a" stroke-width="1.2"/><rect x="514" y="71" width="11" height="11" fill="#5a86c4" stroke="#3a5f98" stroke-width="0.6"/><path d="M521.5 73.5L517 76.5L521.5 79.5" fill="none" stroke="#fff" stroke-width="1.6"/><path d="M536.05 72.95L527.125 81.875" stroke="#c8c8ca" stroke-width="4.2" stroke-linecap="round"/><path d="M535.625 73.375L527.55 81.45" stroke="#d8d8da" stroke-width="2.4" stroke-linecap="round"/><circle cx="542" cy="67" r="8.5" fill="#f4f4f5" fill-opacity="0.9" stroke="#cfcfd1" stroke-width="1.2"/><rect x="547" y="71" width="11" height="11" fill="#d8d8da"/><path d="M550 73.5L554.5 76.5L550 79.5" fill="none" stroke="#fff" stroke-width="1.6"/><path d="M564.5 60.5H580.5V79.5H566.5C565 79.5 564.5 78.5 564.5 77Z" fill="#ececee" stroke="#9a9a9c"/><path d="M566.5 60.5V76" stroke="#c8c8ca"/><rect x="575" y="71" width="11" height="11" rx="1.5" fill="#c8ac2c"/><g stroke="#fff" stroke-width="1.2"><path d="M580.5 73V80M577 76.5H584M577.8 73.8L583.2 79.2M583.2 73.8L577.8 79.2"/></g><circle cx="580.5" cy="76.5" r="1.6" fill="#c8ac2c"/><path d="M597 75L602 63.5H616.5V73.5L612 77Z" fill="#e8e8ea" stroke="#b8b8ba"/><path d="M604 68H615M601 72H613M607 64L604 76" stroke="#c8c8ca" stroke-width="0.7"/><rect x="608" y="71" width="11" height="11" rx="1.5" fill="#c8ac2c"/><g stroke="#fff" stroke-width="1.2"><path d="M613.5 73V80M610 76.5H617M610.8 73.8L616.2 79.2M616.2 73.8L610.8 79.2"/></g><circle cx="613.5" cy="76.5" r="1.6" fill="#c8ac2c"/><path d="M635.5 59.5H645V75L640 79.5L635.5 75Z" fill="#5a86c4" stroke="#333" stroke-width="0.8"/><rect x="641" y="71" width="11" height="11" rx="1.5" fill="#c8ac2c"/><g stroke="#fff" stroke-width="1.2"><path d="M646.5 73V80M643 76.5H650M643.8 73.8L649.2 79.2M649.2 73.8L643.8 79.2"/></g><circle cx="646.5" cy="76.5" r="1.6" fill="#c8ac2c"/><path d="M663.5 60.5H682.5V79.5H666C664.5 79.5 663.5 78.5 663.5 77Z" fill="#eeeef0" stroke="#9a9a9c"/><path d="M666.5 60.5V76" stroke="#c8c8ca"/><path d="M673.5 59.5H678V67L675.8 69.5L673.5 67Z" fill="#5a86c4" stroke="#3a5f98" stroke-width="0.6"/><circle cx="705.5" cy="69.5" r="10.5" fill="#fdfdfd" stroke="#555" stroke-width="1.1"/><path d="M705.5 62V70L710.5 74.5" fill="none" stroke="#555" stroke-width="1.1"/><circle cx="714.0" cy="69.5" r="0.5" fill="#555"/><circle cx="712.9" cy="73.8" r="0.5" fill="#555"/><circle cx="709.8" cy="76.9" r="0.5" fill="#555"/><circle cx="705.5" cy="78.0" r="0.5" fill="#555"/><circle cx="701.2" cy="76.9" r="0.5" fill="#555"/><circle cx="698.1" cy="73.8" r="0.5" fill="#555"/><circle cx="697.0" cy="69.5" r="0.5" fill="#555"/><circle cx="698.1" cy="65.2" r="0.5" fill="#555"/><circle cx="701.2" cy="62.1" r="0.5" fill="#555"/><circle cx="705.5" cy="61.0" r="0.5" fill="#555"/><circle cx="709.8" cy="62.1" r="0.5" fill="#555"/><circle cx="712.9" cy="65.2" r="0.5" fill="#555"/><path d="M731 68C731 61 740 58 746 63L748.5 60.5V68.5H740.5L743 66C739.5 63 735 64.5 734.5 68Z" fill="#5a86c4"/><path d="M747 71C747 78 738 81 732 76L729.5 78.5V70.5H737.5L735 73C738.5 76 743 74.5 743.5 71Z" fill="#5a86c4"/><rect x="765" y="62" width="1" height="1" fill="#b8b8bb"/><rect x="768" y="62" width="1" height="1" fill="#b8b8bb"/><rect x="765" y="65" width="1" height="1" fill="#b8b8bb"/><rect x="768" y="65" width="1" height="1" fill="#b8b8bb"/><rect x="765" y="68" width="1" height="1" fill="#b8b8bb"/><rect x="768" y="68" width="1" height="1" fill="#b8b8bb"/><rect x="765" y="71" width="1" height="1" fill="#b8b8bb"/><rect x="768" y="71" width="1" height="1" fill="#b8b8bb"/><rect x="765" y="74" width="1" height="1" fill="#b8b8bb"/><rect x="768" y="74" width="1" height="1" fill="#b8b8bb"/><rect x="765" y="77" width="1" height="1" fill="#b8b8bb"/><rect x="768" y="77" width="1" height="1" fill="#b8b8bb"/><circle cx="782.5" cy="66.5" r="8" fill="#5a86c4" stroke="#4a70a8" stroke-width="0.8"/><text x="780" y="71.5" font-family="Liberation Serif" font-style="italic" font-weight="bold" font-size="11" fill="#fff">i</text><path d="M786 66L786 78.0L789.0 75.5L791.5 80.0L793.5 79.0L791.2 74.5L795.0 74.5Z" fill="#fff" stroke="#333" stroke-width="0.9" stroke-linejoin="round"/><rect x="810.5" y="60" width="21" height="19.5" fill="none" stroke="#555" stroke-width="1"/><path d="M810 79.5H832" stroke="#555" stroke-width="1.6"/><path d="M811 64H831M811 70H831M811 75H831" stroke="#777" stroke-width="0.8"/><path d="M818 61.7L820.3 64L818 66.3L815.7 64Z" fill="#fff" stroke="#d84a4a" stroke-width="1"/><path d="M825 61.7L827.3 64L825 66.3L822.7 64Z" fill="#fff" stroke="#d84a4a" stroke-width="1"/><path d="M815 67.7L817.3 70L815 72.3L812.7 70Z" fill="#fff" stroke="#5aa85a" stroke-width="1"/><path d="M822 67.7L824.3 70L822 72.3L819.7 70Z" fill="#fff" stroke="#5aa85a" stroke-width="1"/><path d="M816 72.7L818.3 75L816 77.3L813.7 75Z" fill="#fff" stroke="#5a86c4" stroke-width="1"/><path d="M822 72.7L824.3 75L822 77.3L819.7 75Z" fill="#fff" stroke="#5a86c4" stroke-width="1"/><path d="M828 72.7L830.3 75L828 77.3L825.7 75Z" fill="#fff" stroke="#5a86c4" stroke-width="1"/><g fill="#6a98d8"><rect x="852.5" y="58.5" width="4" height="6" rx="1" transform="rotate(0 854.5 69.5)"/><rect x="852.5" y="58.5" width="4" height="6" rx="1" transform="rotate(45 854.5 69.5)"/><rect x="852.5" y="58.5" width="4" height="6" rx="1" transform="rotate(90 854.5 69.5)"/><rect x="852.5" y="58.5" width="4" height="6" rx="1" transform="rotate(135 854.5 69.5)"/><rect x="852.5" y="58.5" width="4" height="6" rx="1" transform="rotate(180 854.5 69.5)"/><rect x="852.5" y="58.5" width="4" height="6" rx="1" transform="rotate(225 854.5 69.5)"/><rect x="852.5" y="58.5" width="4" height="6" rx="1" transform="rotate(270 854.5 69.5)"/><rect x="852.5" y="58.5" width="4" height="6" rx="1" transform="rotate(315 854.5 69.5)"/></g><circle cx="854.5" cy="69.5" r="6.8" fill="#6a98d8"/><circle cx="854.5" cy="69.5" r="2.6" fill="#f4f4f6"/><path d="M881 61H894.5V64.5H892.5L891.5 62.8H886L890.5 70L885.5 77.5H892L893.5 75.5H895.5L894.5 80H880.5V78L886.5 70L881 62.5Z" fill="#8a2aa8" stroke="#6a1a88" stroke-width="0.5"/><rect x="910.5" y="60.5" width="19" height="19" fill="#eef3fb" stroke="#6a90c8"/><rect x="911" y="61" width="18" height="3.5" fill="#a8c0e4"/><path d="M913 67.5H916M918 67.5H927M913 70.5H916M918 70.5H927M913 73.5H916M918 73.5H927M913 76.5H916M918 76.5H927" stroke="#6a90c8" stroke-width="1"/><path d="M937 68H945L941 72Z" fill="#555"/><path d="M955 62.5H975M955 60.5V64.5M975 60.5V64.5" stroke="#2a3a6a" stroke-width="1.3"/><rect x="954.5" y="68.5" width="21" height="9" fill="#9a9a9c" stroke="#6a6a6a"/><path d="M958 68.5V72M962 68.5V73.5M966 68.5V72M970 68.5V73.5M973 68.5V72" stroke="#eee" stroke-width="0.8"/><path d="M983 68H991L987 72Z" fill="#555"/><path d="M1000 60.5H1019C1020.5 60.5 1021.5 61.5 1021.5 63V70C1021.5 71.5 1020.5 72.5 1019 72.5H1007L1003.5 77.5V72.5H1000C998.5 72.5 997.5 71.5 997.5 70V63C997.5 61.5 998.5 60.5 1000 60.5Z" fill="#f6ec8a" stroke="#c8b840"/><circle cx="1002.5" cy="77.5" r="3" fill="#7ab07a" stroke="#4a7a4a" stroke-width="0.8"/><circle cx="1041" cy="67" r="8.5" fill="#e8e8ea" stroke="#8a8a8a" stroke-width="1.4" stroke-dasharray="2.5 1.5"/><circle cx="1041" cy="67" r="5" fill="#5a86c4" stroke="#3a5f98" stroke-width="0.8"/><path d="M1039.5 64.5V69.5L1043.5 67Z" fill="#fff"/><path d="M1045 68L1045 78.8L1047.7 76.55L1049.95 80.6L1051.75 79.7L1049.68 75.65L1053.1 75.65Z" fill="#fff" stroke="#333" stroke-width="0.9" stroke-linejoin="round"/><path d="M1061 68H1069L1065 72Z" fill="#555"/><rect x="1264" y="62" width="1" height="1" fill="#b8b8bb"/><rect x="1267" y="62" width="1" height="1" fill="#b8b8bb"/><rect x="1264" y="65" width="1" height="1" fill="#b8b8bb"/><rect x="1267" y="65" width="1" height="1" fill="#b8b8bb"/><rect x="1264" y="68" width="1" height="1" fill="#b8b8bb"/><rect x="1267" y="68" width="1" height="1" fill="#b8b8bb"/><rect x="1264" y="71" width="1" height="1" fill="#b8b8bb"/><rect x="1267" y="71" width="1" height="1" fill="#b8b8bb"/><rect x="1264" y="74" width="1" height="1" fill="#b8b8bb"/><rect x="1267" y="74" width="1" height="1" fill="#b8b8bb"/><rect x="1264" y="77" width="1" height="1" fill="#b8b8bb"/><rect x="1267" y="77" width="1" height="1" fill="#b8b8bb"/><circle cx="1286" cy="68" r="7" fill="none" stroke="#d4d4d6" stroke-width="2"/><rect x="1289" y="71" width="10" height="10" rx="1.5" fill="#cfcfd1"/><path d="M1294.0 73V79M1291 76.0H1297M1291.8 73.8L1296.2 78.2M1296.2 73.8L1291.8 78.2" stroke="#fff" stroke-width="1"/><path d="M1306 68H1314L1310 72Z" fill="#9a9a9c"/><circle cx="1331" cy="68" r="7" fill="none" stroke="#d4d4d6" stroke-width="2"/><rect x="1334" y="71" width="10" height="10" rx="1.5" fill="#cfcfd1"/><path d="M1339.0 73V79M1336 76.0H1342M1336.8 73.8L1341.2 78.2M1341.2 73.8L1336.8 78.2" stroke="#fff" stroke-width="1"/><path d="M1351 68H1359L1355 72Z" fill="#9a9a9c"/><circle cx="1376" cy="68" r="7" fill="none" stroke="#d4d4d6" stroke-width="2"/><rect x="1379" y="71" width="10" height="10" rx="1.5" fill="#cfcfd1"/><path d="M1384.0 73V79M1381 76.0H1387M1381.8 73.8L1386.2 78.2M1386.2 73.8L1381.8 78.2" stroke="#fff" stroke-width="1"/><path d="M1396 68H1404L1400 72Z" fill="#9a9a9c"/><circle cx="1421" cy="68" r="7" fill="none" stroke="#d4d4d6" stroke-width="2"/><rect x="1424" y="71" width="10" height="10" rx="1.5" fill="#cfcfd1"/><path d="M1429.0 73V79M1426 76.0H1432M1426.8 73.8L1431.2 78.2M1431.2 73.8L1426.8 78.2" stroke="#fff" stroke-width="1"/><path d="M1441 68H1449L1445 72Z" fill="#9a9a9c"/><circle cx="1466" cy="68" r="7" fill="none" stroke="#d4d4d6" stroke-width="2"/><rect x="1469" y="71" width="10" height="10" rx="1.5" fill="#cfcfd1"/><path d="M1474.0 73V79M1471 76.0H1477M1471.8 73.8L1476.2 78.2M1476.2 73.8L1471.8 78.2" stroke="#fff" stroke-width="1"/><path d="M1486 68H1494L1490 72Z" fill="#9a9a9c"/><rect x="1504" y="62" width="1" height="1" fill="#b8b8bb"/><rect x="1507" y="62" width="1" height="1" fill="#b8b8bb"/><rect x="1504" y="65" width="1" height="1" fill="#b8b8bb"/><rect x="1507" y="65" width="1" height="1" fill="#b8b8bb"/><rect x="1504" y="68" width="1" height="1" fill="#b8b8bb"/><rect x="1507" y="68" width="1" height="1" fill="#b8b8bb"/><rect x="1504" y="71" width="1" height="1" fill="#b8b8bb"/><rect x="1507" y="71" width="1" height="1" fill="#b8b8bb"/><rect x="1504" y="74" width="1" height="1" fill="#b8b8bb"/><rect x="1507" y="74" width="1" height="1" fill="#b8b8bb"/><rect x="1504" y="77" width="1" height="1" fill="#b8b8bb"/><rect x="1507" y="77" width="1" height="1" fill="#b8b8bb"/><rect x="1518.5" y="60.5" width="19" height="19" fill="none" stroke="#cfcfd1"/><path d="M1519 60L1528 70M1528 60L1519 70M1519 70H1537M1528 70V79M1530 78L1538 62" stroke="#cfcfd1" stroke-width="1.2"/><rect x="1552.5" y="60.5" width="19" height="19" fill="#eeeef0" stroke="#cfcfd1"/><path d="M1553 70H1562V79M1553 60L1562 70" fill="none" stroke="#cfcfd1"/><path d="M1561 67V79L1564 76.5L1566.5 81L1568.5 80L1566.2 75.5H1570Z" fill="#f4f4f6" stroke="#c8c8ca" stroke-width="0.9"/><path d="M1579 68H1587L1583 72Z" fill="#9a9a9c"/><rect x="1597" y="61" width="8" height="8" fill="none" stroke="#cfcfd1"/><rect x="1597" y="72" width="8" height="8" fill="none" stroke="#cfcfd1"/><path d="M1597 61L1605 69M1605 61L1597 69M1597 72L1605 80M1605 72L1597 80" stroke="#cfcfd1"/><path d="M1610 60L1615 65L1610 70L1607 65Z" fill="none" stroke="#cfcfd1"/><text x="1606" y="81" font-family="Liberation Sans" font-size="12" fill="#d0d0d2">E</text><path d="M1631 60H1650V79H1631Z M1631 60L1640 75L1650 60 M1631 79L1640 75L1650 79" fill="none" stroke="#cfcfd1" stroke-width="1.2"/><path d="M1658 68H1666L1662 72Z" fill="#9a9a9c"/><path d="M20 104L28 100L33 113L25 118Z" fill="#e87040" stroke="#b05030" stroke-width="0.6"/><path d="M23 102L30 99L35 112L28 116Z" fill="#f0c040" stroke="#c09030" stroke-width="0.6"/><rect x="26" y="98" width="12" height="12" transform="rotate(8 32 104)" fill="#5a86c4" stroke="#3a5f98" stroke-width="0.8"/><rect x="32" y="111" width="10" height="10" rx="1.5" fill="#5e9a62"/><path d="M37.0 113V119M34 116.0H40" stroke="#fff" stroke-width="2"/><path d="M51 105L56 101H69L72 105V117L67 120H54L51 117Z" fill="#e6d050" stroke="#806a20" stroke-width="0.8"/><circle cx="62" cy="102" r="6" fill="#6a8ac8" stroke="#3a5a98" stroke-width="0.8"/><path d="M51 105H67L72 101M67 105V120" fill="none" stroke="#806a20" stroke-width="0.8"/><rect x="64" y="111" width="10" height="10" rx="1.5" fill="#c8ac2c"/><g stroke="#fff" stroke-width="1.2"><path d="M69.0 113V119M66 116.0H72M66.8 113.8L71.2 118.2M71.2 113.8L66.8 118.2"/></g><circle cx="69.0" cy="116.0" r="1.6" fill="#c8ac2c"/><path d="M86 100L92 117L98 100" fill="none" stroke="#333" stroke-width="1.3"/><circle cx="86" cy="100" r="1.8" fill="#fff" stroke="#333" stroke-width="0.8"/><circle cx="98" cy="100" r="1.8" fill="#fff" stroke="#333" stroke-width="0.8"/><circle cx="92" cy="117" r="1.8" fill="#fff" stroke="#333" stroke-width="0.8"/><path d="M98 100H104" stroke="#333" stroke-width="1"/><circle cx="104" cy="100" r="1.8" fill="#fff" stroke="#333" stroke-width="0.8"/><rect x="97" y="110" width="10" height="10" rx="1.5" fill="#c8ac2c"/><g stroke="#fff" stroke-width="1.2"><path d="M102.0 112V118M99 115.0H105M99.8 112.8L104.2 117.2M104.2 112.8L99.8 117.2"/></g><circle cx="102.0" cy="115.0" r="1.6" fill="#c8ac2c"/><path d="M118 121C120 110 128 100 138 97C136 107 128 116 121 118Z" fill="#8aa8d0" stroke="#5a7aa8" stroke-width="0.8"/><path d="M118 121L134 101" stroke="#e8eef8" stroke-width="0.8"/><rect x="128" y="110" width="10" height="10" rx="1.5" fill="#c8ac2c"/><g stroke="#fff" stroke-width="1.2"><path d="M133.0 112V118M130 115.0H136M130.8 112.8L135.2 117.2M135.2 112.8L130.8 117.2"/></g><circle cx="133.0" cy="115.0" r="1.6" fill="#c8ac2c"/><rect x="151" y="101" width="19" height="13" rx="1" fill="#5a86c4" stroke="#3a5f98" stroke-width="0.8"/><path d="M154 98V101M157 98V101M160 98V101M163 98V101M166 98V101M154 114V117M157 114V117M160 114V117M163 114V117M166 114V117" stroke="#333" stroke-width="0.9"/><rect x="162" y="111" width="10" height="10" rx="1.5" fill="#c8ac2c"/><g stroke="#fff" stroke-width="1.2"><path d="M167.0 113V119M164 116.0H170M164.8 113.8L169.2 118.2M169.2 113.8L164.8 118.2"/></g><circle cx="167.0" cy="116.0" r="1.6" fill="#c8ac2c"/><rect x="184.5" y="98.5" width="19" height="19" fill="#7a9ac8" stroke="#3a5a90"/><path d="M184.5 108H203.5M194 108V117.5M184.5 98.5L194 108L203.5 98.5" stroke="#2a4a80" stroke-width="1" fill="none"/><rect x="195" y="110" width="10" height="10" rx="1.5" fill="#c8ac2c"/><g stroke="#fff" stroke-width="1.2"><path d="M200.0 112V118M197 115.0H203M197.8 112.8L202.2 117.2M202.2 112.8L197.8 117.2"/></g><circle cx="200.0" cy="115.0" r="1.6" fill="#c8ac2c"/><rect x="217.5" y="98.5" width="19" height="20" rx="1.5" fill="#b8c8e0" stroke="#6a8ab8"/><path d="M219 99L224 115L234 99M224 115L219 118M224 115L235 118" fill="none" stroke="#506a98" stroke-width="1"/><circle cx="224" cy="115" r="1.8" fill="#fff" stroke="#506a98" stroke-width="0.8"/><rect x="228" y="110" width="10" height="10" rx="1.5" fill="#c8ac2c"/><g stroke="#fff" stroke-width="1.2"><path d="M233.0 112V118M230 115.0H236M230.8 112.8L235.2 117.2M235.2 112.8L230.8 117.2"/></g><circle cx="233.0" cy="115.0" r="1.6" fill="#c8ac2c"/><rect x="249" y="101" width="1" height="1" fill="#b8b8bb"/><rect x="252" y="101" width="1" height="1" fill="#b8b8bb"/><rect x="249" y="104" width="1" height="1" fill="#b8b8bb"/><rect x="252" y="104" width="1" height="1" fill="#b8b8bb"/><rect x="249" y="107" width="1" height="1" fill="#b8b8bb"/><rect x="252" y="107" width="1" height="1" fill="#b8b8bb"/><rect x="249" y="110" width="1" height="1" fill="#b8b8bb"/><rect x="252" y="110" width="1" height="1" fill="#b8b8bb"/><rect x="249" y="113" width="1" height="1" fill="#b8b8bb"/><rect x="252" y="113" width="1" height="1" fill="#b8b8bb"/><rect x="249" y="116" width="1" height="1" fill="#b8b8bb"/><rect x="252" y="116" width="1" height="1" fill="#b8b8bb"/><path d="M268 119L281 97L287 101L273 122Z" fill="#d85030" stroke="#8a2a10" stroke-width="0.7"/><path d="M273 119L285 99L290 102L277 122Z" fill="#e87848" stroke="#8a2a10" stroke-width="0.7"/><path d="M268 119L267.5 122.5L271 121Z" fill="#555"/><path d="M284 117H292L288 121Z" fill="#555"/><rect x="294.5" y="94.5" width="31" height="30" rx="3" fill="#e4e4e7" stroke="#b8b8bb"/><path d="M302 118L314 99L319 102L306 121Z" fill="#f0e060" stroke="#8a7a20" stroke-width="0.8"/><path d="M302 118L301.5 122L305.5 121Z" fill="#777"/><rect x="332.5" y="98.5" width="19" height="19" rx="2" fill="#e4e4e6" stroke="#d4d4d6"/><rect x="336" y="99" width="11" height="6" fill="#f4f4f6"/><path d="M348 106L355 112L348 118Z" fill="#d8d8da"/><path d="M367 99C371 96 376 99 378 100C382 98 387 99 386 104C385 111 381 111 377 110C373 109 368 112 366 108C364 104 365 101 367 99Z" fill="#89b68a" stroke="#4d6e4d" stroke-width="1"/><rect x="377" y="110" width="11" height="11" rx="1.5" fill="#c8ac2c"/><g stroke="#fff" stroke-width="1.2"><path d="M382.5 112V119M379 115.5H386M379.8 112.8L385.2 118.2M385.2 112.8L379.8 118.2"/></g><circle cx="382.5" cy="115.5" r="1.6" fill="#c8ac2c"/><rect x="393.5" y="94.5" width="31" height="30" rx="3" fill="#e4e4e7" stroke="#b8b8bb"/><rect x="425.5" y="94.5" width="10" height="30" rx="2" fill="#e4e4e7" stroke="#b8b8bb"/><path d="M426.5 107H434.5L430.5 111Z" fill="#444"/><circle cx="404" cy="103" r="2.5" fill="#fff" stroke="#333" stroke-width="1.1"/><path d="M407 103H418M403 106L400 118" stroke="#333" stroke-width="1"/><path d="M405 117L419 104" stroke="#e0c040" stroke-width="3"/><path d="M409 106L419 119" stroke="#9a8030" stroke-width="2.5"/><path d="M443 100H460M443 106H460M443 112H460M443 118H460" stroke="#d8d8da" stroke-width="3"/><path d="M452 118L463 100" stroke="#c8c8ca" stroke-width="2"/><rect x="477" y="100" width="17" height="20" fill="#e0e0e2" stroke="#d0d0d2"/><path d="M481 103V118M485.5 103V118M490 103V118" stroke="#f4f4f6" stroke-width="1.5"/><path d="M508 101L522 112M508 112L522 101" stroke="#d0d0d2" stroke-width="1.2"/><circle cx="526" cy="104" r="3.5" fill="none" stroke="#d0d0d2" stroke-width="1.4"/><circle cx="526" cy="113" r="3.5" fill="none" stroke="#d0d0d2" stroke-width="1.4"/><path d="M545.5 102.5H551L555.5 107.5V118.5H545.5Z" fill="#fafafb" stroke="#d0d0d2"/><path d="M551 102.5V107.5H555.5" fill="none" stroke="#d0d0d2"/><path d="M550.5 99.5H556L560.5 104.5V113.5H550.5Z" fill="#fafafb" stroke="#d0d0d2"/><path d="M556 99.5V104.5H560.5" fill="none" stroke="#d0d0d2"/><rect x="578.5" y="99.5" width="15" height="19.5" rx="1.5" fill="#f4d8a0" stroke="#e0a030" stroke-width="1.2"/><rect x="580.5" y="102" width="11" height="15" fill="#fff" stroke="#555" stroke-width="0.8"/><rect x="582" y="98.5" width="8" height="3.5" fill="#888"/><path d="M582.5 106H589.5M582.5 108.5H589.5M582.5 111H589.5M582.5 113.5H589.5" stroke="#555" stroke-width="0.8"/><path d="M625 117C630 112 628 105 620 106H616V102L609 108L616 114V110H620C623 110 624 113 622 116Z" fill="#d6d6d8"/><path d="M648 117C643 112 645 105 653 106H657V102L664 108L657 114V110H653C650 110 649 113 651 116Z" fill="#d6d6d8"/><rect x="679" y="101" width="1" height="1" fill="#b8b8bb"/><rect x="682" y="101" width="1" height="1" fill="#b8b8bb"/><rect x="679" y="104" width="1" height="1" fill="#b8b8bb"/><rect x="682" y="104" width="1" height="1" fill="#b8b8bb"/><rect x="679" y="107" width="1" height="1" fill="#b8b8bb"/><rect x="682" y="107" width="1" height="1" fill="#b8b8bb"/><rect x="679" y="110" width="1" height="1" fill="#b8b8bb"/><rect x="682" y="110" width="1" height="1" fill="#b8b8bb"/><rect x="679" y="113" width="1" height="1" fill="#b8b8bb"/><rect x="682" y="113" width="1" height="1" fill="#b8b8bb"/><rect x="679" y="116" width="1" height="1" fill="#b8b8bb"/><rect x="682" y="116" width="1" height="1" fill="#b8b8bb"/><rect x="690.5" y="98.5" width="21" height="20" fill="#dcdce0" stroke="#333" stroke-width="1" stroke-dasharray="2 1.5"/><rect x="691" y="99" width="14" height="13" fill="#f3d55b" stroke="#b09030" stroke-width="0.8"/><path d="M700 104L700 116.0L703.0 113.5L705.5 118.0L707.5 117.0L705.2 112.5L709.0 112.5Z" fill="#fff" stroke="#333" stroke-width="0.9" stroke-linejoin="round"/><path d="M719 107H727L723 111Z" fill="#555"/><rect x="737.5" y="98.5" width="15" height="14" fill="#e8e8ea" stroke="#777"/><path d="M740 102.5H750M740 106.5H750" stroke="#777" stroke-width="1.3"/><rect x="741.5" y="106.5" width="15" height="12" fill="#f3d55b" stroke="#b09030"/><path d="M764 107H772L768 111Z" fill="#555"/><rect x="783.5" y="98.5" width="13" height="12" fill="#f3d55b" stroke="#b09030"/><rect x="786.5" y="101.5" width="13" height="12" fill="#f3d55b" stroke="#b09030"/><rect x="789.5" y="104.5" width="13" height="12" fill="#f3d55b" stroke="#b09030"/><rect x="794" y="111" width="10" height="10" rx="2" fill="#d03040"/><circle cx="799" cy="116" r="3" fill="none" stroke="#fff" stroke-width="1.2"/><path d="M797 118L801 114" stroke="#fff"/><path d="M809 107H817L813 111Z" fill="#555"/><rect x="827.5" y="98.5" width="14" height="14" fill="#f3d55b" stroke="#b09030"/><path d="M845 120L841.5 114A3.5 3.5 0 1 1 848.5 114Z" fill="#7a8aa0"/><circle cx="845" cy="112.5" r="1.2" fill="#fff"/><rect x="866" y="101" width="1" height="1" fill="#b8b8bb"/><rect x="869" y="101" width="1" height="1" fill="#b8b8bb"/><rect x="866" y="104" width="1" height="1" fill="#b8b8bb"/><rect x="869" y="104" width="1" height="1" fill="#b8b8bb"/><rect x="866" y="107" width="1" height="1" fill="#b8b8bb"/><rect x="869" y="107" width="1" height="1" fill="#b8b8bb"/><rect x="866" y="110" width="1" height="1" fill="#b8b8bb"/><rect x="869" y="110" width="1" height="1" fill="#b8b8bb"/><rect x="866" y="113" width="1" height="1" fill="#b8b8bb"/><rect x="869" y="113" width="1" height="1" fill="#b8b8bb"/><rect x="866" y="116" width="1" height="1" fill="#b8b8bb"/><rect x="869" y="116" width="1" height="1" fill="#b8b8bb"/><path d="M873 109L878 103.5H897V114.5H878Z" fill="#f2dc50" stroke="#b09a20" stroke-width="1"/><text x="878.5" y="113" font-family="Liberation Sans" font-weight="bold" font-size="10" fill="#333">abc</text><path d="M914 107L914 100A7 7 0 0 1 921 107Z" fill="#d04040"/><path d="M914 107L921 107A7 7 0 0 1 910 113Z" fill="#9a2a2a"/><path d="M914 107L910 113A7 7 0 0 1 914 100Z" fill="#4a8a4a"/><path d="M914 100A7 7 0 0 1 917 100.5L914 107Z" fill="#f0d040"/><rect x="913" y="113" width="4" height="7" fill="#f0d040"/><rect x="917" y="108" width="4" height="12" fill="#4a8a4a"/><rect x="921" y="115" width="4" height="5" fill="#9a2a2a"/><path d="M947 100V118" stroke="#d8d8da"/><path d="M949 109L954 103.5H969V114.5H954Z" fill="#dde8f6" stroke="#6a8ac0" stroke-width="1"/><text x="954.5" y="113" font-family="Liberation Sans" font-weight="bold" font-size="10" fill="#334">ab</text><circle cx="965" cy="115" r="4" fill="#c02030"/><path d="M965 110V104" stroke="#777" stroke-width="1.5"/><path d="M979 109L984 103.5H1003V114.5H984Z" fill="#fff" stroke="#c02030" stroke-width="1"/><text x="984.5" y="113" font-family="Liberation Sans" font-weight="bold" font-size="10" fill="#c02030">abc</text><path d="M1011 100V118" stroke="#d8d8da"/><path d="M1019 107L1024 101.5H1039V112.5H1024Z" fill="#ececee" stroke="#d4d4d6" stroke-width="1"/><text x="1024.5" y="111" font-family="Liberation Sans" font-weight="bold" font-size="10" fill="#c4c4c6">ab</text><rect x="1033" y="110" width="8" height="8" rx="1" fill="#d4d4d6"/><path d="M1053 107L1058 101.5H1073V112.5H1058Z" fill="#ececee" stroke="#d4d4d6" stroke-width="1"/><text x="1058.5" y="111" font-family="Liberation Sans" font-weight="bold" font-size="10" fill="#c4c4c6">abc</text><rect x="1067" y="110" width="8" height="8" rx="1" fill="#d4d4d6"/><path d="M1086 107L1091 101.5H1106V112.5H1091Z" fill="#ececee" stroke="#d4d4d6" stroke-width="1"/><text x="1091.5" y="111" font-family="Liberation Sans" font-weight="bold" font-size="10" fill="#c4c4c6">abc</text><rect x="1100" y="110" width="8" height="8" rx="1" fill="#d4d4d6"/><path d="M1119 107L1124 101.5H1139V112.5H1124Z" fill="#ececee" stroke="#d4d4d6" stroke-width="1"/><text x="1124.5" y="111" font-family="Liberation Sans" font-weight="bold" font-size="10" fill="#c4c4c6">abc</text><rect x="1133" y="110" width="8" height="8" rx="1" fill="#d4d4d6"/><path d="M1152 107L1157 101.5H1172V112.5H1157Z" fill="#ececee" stroke="#d4d4d6" stroke-width="1"/><text x="1157.5" y="111" font-family="Liberation Sans" font-weight="bold" font-size="10" fill="#c4c4c6">abc</text><rect x="1166" y="110" width="8" height="8" rx="1" fill="#d4d4d6"/><rect x="1189" y="101" width="1" height="1" fill="#b8b8bb"/><rect x="1192" y="101" width="1" height="1" fill="#b8b8bb"/><rect x="1189" y="104" width="1" height="1" fill="#b8b8bb"/><rect x="1192" y="104" width="1" height="1" fill="#b8b8bb"/><rect x="1189" y="107" width="1" height="1" fill="#b8b8bb"/><rect x="1192" y="107" width="1" height="1" fill="#b8b8bb"/><rect x="1189" y="110" width="1" height="1" fill="#b8b8bb"/><rect x="1192" y="110" width="1" height="1" fill="#b8b8bb"/><rect x="1189" y="113" width="1" height="1" fill="#b8b8bb"/><rect x="1192" y="113" width="1" height="1" fill="#b8b8bb"/><rect x="1189" y="116" width="1" height="1" fill="#b8b8bb"/><rect x="1192" y="116" width="1" height="1" fill="#b8b8bb"/><circle cx="1212" cy="106" r="10" fill="#7a98c8" stroke="#3a5a88"/><path d="M1203 104H1221M1204 109H1220M1212 96V116" stroke="#b0c4e4" stroke-width="0.8"/><ellipse cx="1212" cy="106" rx="5" ry="10" fill="none" stroke="#b0c4e4" stroke-width="0.8"/><path d="M1205 101H1209V104H1205ZM1214 101H1219V105H1214Z" fill="#2a3a68"/><circle cx="1207" cy="118" r="3.3" fill="#fff" stroke="#111" stroke-width="2"/><circle cx="1218" cy="118" r="3.3" fill="#fff" stroke="#111" stroke-width="2"/><path d="M1204.5 115L1208 111H1211V115M1220.5 115L1217 111H1214V115" fill="#111"/><rect x="1209" y="112" width="7" height="3" fill="#111"/><rect x="1238" y="101" width="1" height="1" fill="#b8b8bb"/><rect x="1241" y="101" width="1" height="1" fill="#b8b8bb"/><rect x="1238" y="104" width="1" height="1" fill="#b8b8bb"/><rect x="1241" y="104" width="1" height="1" fill="#b8b8bb"/><rect x="1238" y="107" width="1" height="1" fill="#b8b8bb"/><rect x="1241" y="107" width="1" height="1" fill="#b8b8bb"/><rect x="1238" y="110" width="1" height="1" fill="#b8b8bb"/><rect x="1241" y="110" width="1" height="1" fill="#b8b8bb"/><rect x="1238" y="113" width="1" height="1" fill="#b8b8bb"/><rect x="1241" y="113" width="1" height="1" fill="#b8b8bb"/><rect x="1238" y="116" width="1" height="1" fill="#b8b8bb"/><rect x="1241" y="116" width="1" height="1" fill="#b8b8bb"/><path d="M1261 98C1255 98 1255.5 100.5 1255.5 101V104H1261.5V105H1253C1250 105 1250 108 1250 109.5C1250 113 1251 115 1254 115H1256V111.5C1256 109.5 1257.5 108.5 1259.5 108.5H1264.5C1266 108.5 1267 107.5 1267 106V101C1267 99.5 1265.5 98 1261 98Z" fill="#3a74b0"/><circle cx="1258.5" cy="100.5" r="0.9" fill="#fff"/><path d="M1262 120C1268 120 1267.5 117.5 1267.5 117V114H1261.5V113H1270C1273 113 1273 110 1273 108.5C1273 105 1272 103 1269 103H1267V106.5C1267 108.5 1265.5 109.5 1263.5 109.5H1258.5C1257 109.5 1256 110.5 1256 112V117C1256 118.5 1257.5 120 1262 120Z" fill="#f0d040"/><path d="M1266 115L1270 117.5L1266 120" fill="none" stroke="#444" stroke-width="1"/><rect x="1287" y="101" width="1" height="1" fill="#b8b8bb"/><rect x="1290" y="101" width="1" height="1" fill="#b8b8bb"/><rect x="1287" y="104" width="1" height="1" fill="#b8b8bb"/><rect x="1290" y="104" width="1" height="1" fill="#b8b8bb"/><rect x="1287" y="107" width="1" height="1" fill="#b8b8bb"/><rect x="1290" y="107" width="1" height="1" fill="#b8b8bb"/><rect x="1287" y="110" width="1" height="1" fill="#b8b8bb"/><rect x="1290" y="110" width="1" height="1" fill="#b8b8bb"/><rect x="1287" y="113" width="1" height="1" fill="#b8b8bb"/><rect x="1290" y="113" width="1" height="1" fill="#b8b8bb"/><rect x="1287" y="116" width="1" height="1" fill="#b8b8bb"/><rect x="1290" y="116" width="1" height="1" fill="#b8b8bb"/><rect x="1300" y="98" width="20" height="21" fill="#2a3a5a"/><rect x="1304" y="98.5" width="15.5" height="20" fill="#5a86c4"/><text x="1308" y="113" font-family="Liberation Sans" font-size="12" fill="#fff">?</text><rect x="1335" y="101" width="1" height="1" fill="#b8b8bb"/><rect x="1338" y="101" width="1" height="1" fill="#b8b8bb"/><rect x="1335" y="104" width="1" height="1" fill="#b8b8bb"/><rect x="1338" y="104" width="1" height="1" fill="#b8b8bb"/><rect x="1335" y="107" width="1" height="1" fill="#b8b8bb"/><rect x="1338" y="107" width="1" height="1" fill="#b8b8bb"/><rect x="1335" y="110" width="1" height="1" fill="#b8b8bb"/><rect x="1338" y="110" width="1" height="1" fill="#b8b8bb"/><rect x="1335" y="113" width="1" height="1" fill="#b8b8bb"/><rect x="1338" y="113" width="1" height="1" fill="#b8b8bb"/><rect x="1335" y="116" width="1" height="1" fill="#b8b8bb"/><rect x="1338" y="116" width="1" height="1" fill="#b8b8bb"/><rect x="1352" y="101" width="1" height="1" fill="#b8b8bb"/><rect x="1355" y="101" width="1" height="1" fill="#b8b8bb"/><rect x="1352" y="104" width="1" height="1" fill="#b8b8bb"/><rect x="1355" y="104" width="1" height="1" fill="#b8b8bb"/><rect x="1352" y="107" width="1" height="1" fill="#b8b8bb"/><rect x="1355" y="107" width="1" height="1" fill="#b8b8bb"/><rect x="1352" y="110" width="1" height="1" fill="#b8b8bb"/><rect x="1355" y="110" width="1" height="1" fill="#b8b8bb"/><rect x="1352" y="113" width="1" height="1" fill="#b8b8bb"/><rect x="1355" y="113" width="1" height="1" fill="#b8b8bb"/><rect x="1352" y="116" width="1" height="1" fill="#b8b8bb"/><rect x="1355" y="116" width="1" height="1" fill="#b8b8bb"/><text x="1365" y="119" font-family="Liberation Sans" font-weight="bold" font-size="17" fill="#5a7ab8" stroke="#2a4a80" stroke-width="0.5">A</text><path d="M1366 99H1373L1378 104H1383" fill="none" stroke="#4a6aa0" stroke-width="1"/><circle cx="1366" cy="99" r="1.2" fill="#4a6aa0"/><circle cx="1383" cy="104" r="1.2" fill="#4a6aa0"/><path d="M1384 97L1385.5 100H1388.5L1386 102L1387 105L1384 103L1381 105L1382 102L1379.5 100H1382.5Z" fill="#5a86c4"/><rect x="1379" y="110" width="9" height="9" rx="1.5" fill="#c8ac2c"/><g stroke="#fff" stroke-width="1.2"><path d="M1383.5 112V117M1381 114.5H1386M1381.8 112.8L1385.2 116.2M1385.2 112.8L1381.8 116.2"/></g><circle cx="1383.5" cy="114.5" r="1.6" fill="#c8ac2c"/><path d="M1394 107H1402L1398 111Z" fill="#555"/><rect x="1410.5" y="99.5" width="19" height="18" fill="none" stroke="#555" stroke-dasharray="1.5 1.5"/><path d="M1414 99L1414 114.6L1417.9 111.35L1421.15 117.2L1423.75 115.9L1420.76 110.05L1425.7 110.05Z" fill="#fff" stroke="#333" stroke-width="0.9" stroke-linejoin="round"/><path d="M1446 99L1461 99L1453 117L1446 112Z" fill="none" stroke="#333" stroke-width="1.2"/><circle cx="1446" cy="99" r="2.2" fill="#3a7ad8"/><circle cx="1461" cy="99" r="2.2" fill="#3a7ad8"/><circle cx="1453" cy="117" r="2.2" fill="#3a7ad8"/><circle cx="1446" cy="112" r="2.2" fill="#3a7ad8"/><rect x="1457" y="111" width="9" height="9" rx="1.5" fill="#5e9a62"/><path d="M1461.5 113V118M1459 115.5H1464" stroke="#fff" stroke-width="2"/><path d="M1481 99H1493M1481 99L1479 108L1485 117" fill="none" stroke="#333" stroke-width="1.2"/><circle cx="1481" cy="99" r="2.2" fill="#3a7ad8"/><circle cx="1493" cy="99" r="2.2" fill="#3a7ad8"/><circle cx="1479" cy="108" r="2.2" fill="#3a7ad8"/><circle cx="1485" cy="117" r="2.2" fill="#3a7ad8"/><rect x="1490" y="111" width="9" height="9" rx="1.5" fill="#5e9a62"/><path d="M1494.5 113V118M1492 115.5H1497" stroke="#fff" stroke-width="2"/><path d="M1520 98L1523 104.5L1530 105L1525 110L1526.5 117L1520 113.5L1513.5 117L1515 110L1510 105L1517 104.5Z" fill="#f6dc90" stroke="#d8b060" stroke-width="0.8"/><rect x="1525" y="111" width="9" height="9" rx="1.5" fill="#5e9a62"/><path d="M1529.5 113V118M1527 115.5H1532" stroke="#fff" stroke-width="2"/><text x="1546" y="114" font-family="Liberation Serif" font-size="15" fill="#222">T</text><rect x="1545" y="114" width="3" height="3" fill="none" stroke="#777" stroke-width="0.8"/><rect x="1558" y="111" width="9" height="9" rx="1.5" fill="#5e9a62"/><path d="M1562.5 113V118M1560 115.5H1565" stroke="#fff" stroke-width="2"/><path d="M1574 100V118" stroke="#d8d8da"/><path d="M1582.5 98.5H1604.5V112.5H1588L1583.5 118L1585 112.5H1582.5Z" fill="#eeeef0" stroke="#777"/><text x="1588.5" y="111" font-family="Liberation Serif" font-weight="bold" font-size="13" fill="#333">T</text><path d="M1611 107H1619L1615 111Z" fill="#555"/><rect x="1631" y="101" width="1" height="1" fill="#b8b8bb"/><rect x="1634" y="101" width="1" height="1" fill="#b8b8bb"/><rect x="1631" y="104" width="1" height="1" fill="#b8b8bb"/><rect x="1634" y="104" width="1" height="1" fill="#b8b8bb"/><rect x="1631" y="107" width="1" height="1" fill="#b8b8bb"/><rect x="1634" y="107" width="1" height="1" fill="#b8b8bb"/><rect x="1631" y="110" width="1" height="1" fill="#b8b8bb"/><rect x="1634" y="110" width="1" height="1" fill="#b8b8bb"/><rect x="1631" y="113" width="1" height="1" fill="#b8b8bb"/><rect x="1634" y="113" width="1" height="1" fill="#b8b8bb"/><rect x="1631" y="116" width="1" height="1" fill="#b8b8bb"/><rect x="1634" y="116" width="1" height="1" fill="#b8b8bb"/><g transform="translate(1655 110) rotate(-45)"><path d="M-8.5 -8.5V0A8.5 8.5 0 0 0 8.5 0V-8.5H3.2V0A3.2 3.2 0 0 1 -3.2 0V-8.5Z" fill="#c80808" stroke="#6a0a0a" stroke-width="0.7"/><rect x="-8.5" y="-8.5" width="5.3" height="4" fill="#f6f0f0" stroke="#333" stroke-width="0.8"/><rect x="3.2" y="-8.5" width="5.3" height="4" fill="#f6f0f0" stroke="#333" stroke-width="0.8"/></g><path d="M1676.5 106L1679 108.5L1676.5 111M1680.5 106L1683 108.5L1680.5 111" fill="none" stroke="#333" stroke-width="1.1"/><rect x="21" y="136" width="1" height="1" fill="#b8b8bb"/><rect x="24" y="136" width="1" height="1" fill="#b8b8bb"/><path d="M19 136H35" stroke="#c0c0c3" stroke-dasharray="1 2"/><path d="M15 145L15 169H38Z" fill="#f08a5a" stroke="#5a3020" stroke-width="0.8"/><path d="M19 159V165H25Z" fill="#fff" stroke="#5a3020" stroke-width="0.6"/><rect x="32" y="146" width="6" height="23" fill="#f3d55b" stroke="#8a7020" stroke-width="0.6"/><path d="M32 150H34.5M32 153H34.5M32 156H34.5M32 159H34.5M32 162H34.5" stroke="#8a7020" stroke-width="0.6"/><path d="M16 196L33 181" stroke="#d8d8da" stroke-width="1"/><circle cx="16" cy="196" r="1.8" fill="#eee" stroke="#d0d0d2"/><circle cx="33" cy="181" r="1.8" fill="#eee" stroke="#d0d0d2"/><path d="M39 186H47L43 190Z" fill="#9a9a9c"/><path d="M13 211C17 208 22 211 24 212C28 210 33 211 32 216C31 221 27 221 23 220C19 219 14 222 12 218C10 216 11 213 13 211Z" fill="#89b68a" stroke="#4d6e4d" stroke-width="1"/><rect x="23" y="222" width="12" height="10" rx="1.5" fill="#3a4a68"/><path d="M25 227H30M28 224L31.5 227L28 230" fill="none" stroke="#fff" stroke-width="1.6"/><path d="M39 219H47L43 223Z" fill="#555"/><path d="M18 244C22 241 27 244 29 245C33 243 38 244 37 249C36 254 32 254 28 253C24 252 19 255 17 251C15 249 16 246 18 244Z" fill="#89b68a" stroke="#4d6e4d" stroke-width="1"/><rect x="28" y="256" width="11" height="11" rx="1.5" fill="#3a4a68"/><path d="M36 261.5A3 3 0 1 1 33.5 258.5" fill="none" stroke="#fff" stroke-width="1.4"/><path d="M18 276C22 273 27 276 29 277C33 275 38 276 37 281C36 286 32 286 28 285C24 284 19 287 17 283C15 281 16 278 18 276Z" fill="#89b68a" stroke="#4d6e4d" stroke-width="1"/><rect x="28" y="288" width="11" height="11" rx="1.5" fill="#3a4a68"/><path d="M30 293.5H37M30 293.5L32 291.5M30 293.5L32 295.5M37 293.5L35 291.5M37 293.5L35 295.5" fill="none" stroke="#fff" stroke-width="1.3"/><circle cx="22" cy="313" r="7" fill="#89b68a" stroke="#4d6e4d" stroke-width="0.8"/><path d="M29 314L34 317V323L29 326L24 323V317Z" fill="#9ab8d8" stroke="#4a6a98" stroke-width="0.8"/><circle cx="29" cy="320" r="1.2" fill="#333"/><path d="M17 340C21 337 26 340 28 341C32 339 37 340 36 345C35 350 31 350 27 349C23 348 18 351 16 347C14 345 15 342 17 340Z" fill="#89b68a" stroke="#4d6e4d" stroke-width="1"/><ellipse cx="23" cy="344" rx="4.5" ry="3" fill="#fff" stroke="#4d6e4d"/><rect x="28" y="351" width="10" height="10" rx="1.5" fill="#c8ac2c"/><g stroke="#fff" stroke-width="1.2"><path d="M33.0 353V359M30 356.0H36M30.8 353.8L35.2 358.2M35.2 353.8L30.8 358.2"/></g><circle cx="33.0" cy="356.0" r="1.6" fill="#c8ac2c"/><path d="M23 372C27 369 32 372 34 373C38 371 41 372 40 377C39 382 37 382 33 381C29 380 24 383 22 379C20 377 21 374 23 372Z" fill="#bdbdbf" stroke="#6a6a6a" stroke-width="1"/><path d="M16 388C17 383 21 380 25 381C26 385 24 389 19 390Z" fill="#89b68a" stroke="#4d6e4d" stroke-width="0.8"/><rect x="28" y="383" width="10" height="10" rx="1.5" fill="#c8ac2c"/><g stroke="#fff" stroke-width="1.2"><path d="M33.0 385V391M30 388.0H36M30.8 385.8L35.2 390.2M35.2 385.8L30.8 390.2"/></g><circle cx="33.0" cy="388.0" r="1.6" fill="#c8ac2c"/><path d="M17 404C21 401 26 404 28 405C32 403 37 404 36 409C35 414 31 414 27 413C23 412 18 415 16 411C14 409 15 406 17 404Z" fill="#bdbdbf" stroke="#6a6a6a" stroke-width="1"/><ellipse cx="23" cy="408" rx="4.5" ry="3" fill="#fff" stroke="#6a6a6a"/><ellipse cx="23" cy="408" rx="4.5" ry="3" fill="#89b68a" stroke="#4d6e4d"/><rect x="28" y="415" width="10" height="10" rx="1.5" fill="#c8ac2c"/><g stroke="#fff" stroke-width="1.2"><path d="M33.0 417V423M30 420.0H36M30.8 417.8L35.2 422.2M35.2 417.8L30.8 422.2"/></g><circle cx="33.0" cy="420.0" r="1.6" fill="#c8ac2c"/><path d="M17 437C21 434 26 437 28 438C32 436 37 437 36 442C35 447 31 447 27 446C23 445 18 448 16 444C14 442 15 439 17 437Z" fill="#89b68a" stroke="#4d6e4d" stroke-width="1"/><ellipse cx="23" cy="441" rx="4.5" ry="3" fill="#fff" stroke="#4d6e4d"/><rect x="28" y="448" width="10" height="10" rx="1.5" fill="#d24a6a"/><path d="M30.5 450.5L35.5 455.5M35.5 450.5L30.5 455.5" stroke="#fff" stroke-width="1.8"/><path d="M23 469C27 466 32 469 34 470C38 468 41 469 40 474C39 479 37 479 33 478C29 477 24 480 22 476C20 474 21 471 23 469Z" fill="#bdbdbf" stroke="#6a6a6a" stroke-width="1"/><path d="M16 485C17 480 21 477 25 478C26 482 24 486 19 487Z" fill="#89b68a" stroke="#4d6e4d" stroke-width="0.8"/><rect x="28" y="480" width="10" height="10" rx="1.5" fill="#d24a6a"/><path d="M30.5 482.5L35.5 487.5M35.5 482.5L30.5 487.5" stroke="#fff" stroke-width="1.8"/><path d="M17 500C22 497 29 497 34 500C38 503 36 510 31 510C28 510 27 512 26 516L22 519C20 514 19 510 17 507C15 504 15 501 17 500Z" fill="#89b68a" stroke="#4d6e4d" stroke-width="0.8"/><path d="M17 507C19 510 20 514 22 519L26 516C25 512 24 509 21 507Z" fill="#d8c040" stroke="#8a7020" stroke-width="0.6"/><path d="M18 547C14 543 17 534 26 533C33 532 39 535 37 540C35 546 28 552 22 550Z" fill="#89b68a" stroke="#c8b030" stroke-width="2.2"/><path d="M19 545C21 541 27 538 33 537" stroke="#d8c840" stroke-dasharray="1 2" stroke-width="1"/><path d="M19 563L26 572V582M33 563L26 572" fill="none" stroke="#d8d8da" stroke-width="1.3"/><rect x="27" y="574" width="9" height="9" rx="1" fill="none" stroke="#d4d4d6"/><circle cx="36" cy="563" r="1.5" fill="none" stroke="#d4d4d6"/><path d="M26 594V616M16 605H37" stroke="#6a6a6a" stroke-width="1.1"/><path d="M26 594V603" stroke="#5aa05a" stroke-width="2"/><path d="M26 607V616" stroke="#c04040" stroke-width="2"/><circle cx="25" cy="604" r="2" fill="#fff" stroke="#333" stroke-width="0.8"/><circle cx="31" cy="604" r="2" fill="#fff" stroke="#333" stroke-width="0.8"/><rect x="31" y="593" width="6" height="6" rx="1" fill="#e8c030"/><rect x="16" y="610" width="6" height="6" rx="1" fill="#d04a6a"/><path d="M25 626C18 625 15 630 17 635C19 638 23 637 25 634Z" fill="#b8b8ba" stroke="#555" stroke-width="0.8"/><path d="M27 626C34 625 37 630 35 635C33 638 29 637 27 634Z" fill="#89b68a" stroke="#4d6e4d" stroke-width="0.8"/><path d="M24 626L28 641M28 626L24 641" stroke="#8a8a8a" stroke-width="1.2"/><ellipse cx="21" cy="644" rx="3.3" ry="2.5" fill="none" stroke="#c02020" stroke-width="1.6"/><ellipse cx="31" cy="644" rx="3.3" ry="2.5" fill="none" stroke="#c02020" stroke-width="1.6"/><path d="M25 657C18 656 15 661 17 666C19 669 23 668 25 665Z" fill="#89b68a" stroke="#555" stroke-width="0.8"/><path d="M27 657C34 656 37 661 35 666C33 669 29 668 27 665Z" fill="#89b68a" stroke="#4d6e4d" stroke-width="0.8"/><path d="M24 657L28 672M28 657L24 672" stroke="#8a8a8a" stroke-width="1.2"/><ellipse cx="21" cy="675" rx="3.3" ry="2.5" fill="none" stroke="#c02020" stroke-width="1.6"/><ellipse cx="31" cy="675" rx="3.3" ry="2.5" fill="none" stroke="#c02020" stroke-width="1.6"/><path d="M25 690C18 689 15 694 17 698C19 701 23 700 25 697ZM27 690C34 689 37 694 35 698C33 701 29 700 27 697Z" fill="#dcdcde" stroke="#c8c8ca" stroke-width="0.8"/><path d="M20 701C23 705 26 709 28 711" stroke="#c8c8ca"/><path d="M17 723H35M17 733H35M17 743H35M21 719V727M31 719V727M21 729V737M31 729V737M21 739V747M31 739V747" stroke="#d8d8da" stroke-width="1.2"/><path d="M21 755L21 769L32 762Z" fill="#dcdcde" stroke="#c8c8ca"/><path d="M16 772L21 764L26 772Z" fill="none" stroke="#d0d0d2"/><path d="M17 764A8 8 0 0 1 22 754" fill="none" stroke="#d0d0d2"/><path d="M38 763H46L42 767Z" fill="#9a9a9c"/><rect x="62.5" y="155.5" width="12" height="12" fill="none" stroke="#777"/><circle cx="73" cy="166" r="2.6" fill="#7ab07a" stroke="#4a7a4a" stroke-width="0.6"/><path d="M87 161C87 156 94 154 98 157L100 155V161H94L96 159C93.5 157 90 158 89.5 161Z" fill="#5a86c4"/><path d="M100 164C100 169 93 171 89 168L87 170V164H93L91 166C93.5 168 97 167 97.5 164Z" fill="#5a86c4"/><path d="M111 156H126L120.5 163V170L116.5 168V163Z" fill="#5a86c4" stroke="#3a5f98" stroke-width="0.6"/><rect x="111" y="155.5" width="15" height="2.5" fill="#f0d040"/><rect x="138.5" y="157.5" width="7" height="11" fill="#fff" stroke="#c0a040" stroke-width="0.8"/><path d="M146 170V159M142.5 161.5L146 156L149.5 161.5" stroke="#5a86c4" stroke-width="2.2" fill="none"/><circle cx="169" cy="163" r="7" fill="#5a86c4"/><text x="167" y="167.5" font-family="Liberation Serif" font-style="italic" font-weight="bold" font-size="10" fill="#fff">i</text><g transform="translate(4 0)"><path d="M60 633L64 626L71 630L67 637Z" fill="#e8b030"/><path d="M60 633L63 628L66 630L63 636Z" fill="#d04040"/><path d="M61 629L65 625L69 627Z" fill="#f0e040"/><path d="M68 629L75 622" stroke="#b8903a" stroke-width="2"/></g><rect x="88.5" y="624.5" width="9" height="12" fill="#fff" stroke="#777"/><rect x="91.5" y="621.5" width="6" height="12" fill="#fff" stroke="#777"/><circle cx="97.5" cy="635" r="2.5" fill="#7ab07a"/><path d="M112 629C115 624 121 624 125 629C121 634 115 634 112 629Z" fill="#e8e8ee" stroke="#777" stroke-width="0.8"/><circle cx="118.5" cy="629" r="2.8" fill="#5a86c4"/><path d="M121 631H129L125 635Z" fill="#555"/><path d="M137 623H152L146.5 630V637L142.5 635V630Z" fill="#5a86c4"/><rect x="137" y="622.5" width="15" height="2.5" fill="#f0d040"/><path d="M146 632H154L150 636Z" fill="#555"/><text x="162" y="633" font-family="Liberation Serif" font-size="14" fill="#444">ε</text><rect x="170" y="630" width="7" height="7" fill="#c8c8ca"/><path d="M182 627H190L186 631Z" fill="#555"/><rect x="200.5" y="624.5" width="8" height="12" fill="#fff" stroke="#c0a040" stroke-width="0.8"/><path d="M209 621V634M205.5 630.5L209 636L212.5 630.5" stroke="#5a86c4" stroke-width="2.2" fill="none"/><rect x="225.5" y="624.5" width="8" height="12" fill="#fff" stroke="#c0a040" stroke-width="0.8"/><path d="M233 637V624M229.5 627.5L233 622L236.5 627.5" stroke="#5a86c4" stroke-width="2.2" fill="none"/><rect x="249.5" y="622.5" width="11" height="11" fill="none" stroke="#777"/><rect x="256" y="631" width="7" height="5" rx="2" fill="#d03040"/><path d="M1198 202L1202 194L1210 198L1206 206Z" fill="#e8b030"/><path d="M1197 202L1201 196L1204 198L1201 205Z" fill="#d04040"/><path d="M1199 197L1203 193L1206 195Z" fill="#f0e040"/><path d="M1207 197L1216 189" stroke="#b8903a" stroke-width="2.2"/><rect x="1202" y="198" width="4" height="3" fill="#4a6ab0"/><rect x="1238.5" y="193" width="11" height="4" rx="1" fill="#3a7a3a"/><rect x="1240.5" y="198" width="11" height="4" rx="1" fill="#3a7a3a"/><rect x="1238.5" y="203" width="11" height="4" rx="1" fill="#3a7a3a"/><path d="M1195 229L1198 224.5H1215V233.5H1198Z" fill="#f2dc50" stroke="#8a7a20" stroke-width="0.8"/><text x="1199" y="232" font-family="Liberation Sans" font-weight="bold" font-size="8" fill="#333">abc</text><text x="1195.5" y="264" font-family="Liberation Sans" font-weight="bold" font-size="11.5" fill="#fff" stroke="#333" stroke-width="2.4" paint-order="stroke" stroke-linejoin="round" textLength="20">abc</text><path d="M1205 283L1215 288V298L1205 303L1195 298V288Z" fill="#6ab04a" stroke="#3a6a2a" stroke-width="0.8"/><path d="M1195 288L1205 283L1215 288L1205 293Z" fill="#d04050"/><path d="M1205 293V303L1215 298V288Z" fill="#e0c030"/><rect x="1201" y="316" width="8" height="5" fill="#d04050"/><path d="M1205 321V325M1199 325H1211M1199 325V329M1211 325V329" stroke="#e0c030" stroke-width="1.5"/><rect x="1195" y="329" width="8" height="5" fill="#f0d040"/><rect x="1207" y="329" width="8" height="5" fill="#6a98d8"/><path d="M1199 352C1201 348 1207 348 1209 352" fill="none" stroke="#6ab04a" stroke-width="2.5"/><path d="M1201 360C1203 364 1209 364 1211 360" fill="none" stroke="#e87040" stroke-width="2.5"/><circle cx="375" cy="144" r="9.5" fill="none" stroke="#fff" stroke-width="2.4"/><path d="M368.5 150.5L381.5 137.5" stroke="#fff" stroke-width="2.4"/><circle cx="1148.5" cy="143" r="8" fill="#222"/><path d="M1145 139.5L1152 146.5M1152 139.5L1145 146.5" stroke="#fff" stroke-width="2"/><path d="M1161.5 142H1168.5L1165 145.5Z" fill="#f0c0c8"/><clipPath id="brc"><rect x="53" y="180" width="279" height="407"/></clipPath><g clip-path="url(#brc)"><path d="M81 182L83.3 187.5L89 188L84.6 191.8L86 197.5L81 194.4L76 197.5L77.4 191.8L73 188L78.7 187.5Z" fill="#f6e060" stroke="#c8b030" stroke-width="0.8"/><path d="M74.5 201.5H88.5V215.5H76.5C75.3 215.5 74.5 214.7 74.5 213.5Z" fill="#e6e6e8" stroke="#9a9a9c"/><path d="M82 201H86V207L84 209L82 207Z" fill="#7a9ad0"/><path d="M73.5 219.5H79L81 221.5H88.5V233.5H73.5Z" fill="#f4f4f6" stroke="#777"/><path d="M77.5 230.5V226.5L81 223L84.5 226.5V230.5Z" fill="#fff" stroke="#222" stroke-width="0.9" stroke-linejoin="miter"/><path d="M73.5 237.5H79L81 239.5H88.5V251.5H73.5Z" fill="#f4f4f6" stroke="#777"/><path d="M73.5 255.5H79L81 257.5H88.5V269.5H73.5Z" fill="#f4f4f6" stroke="#777"/><path d="M73.5 273.5H79L81 275.5H88.5V287.5H73.5Z" fill="#f4f4f6" stroke="#777"/><path d="M73 295L77 291H88L90 295V303L86 306H75L73 303Z" fill="#e6d050" stroke="#806a20" stroke-width="0.8"/><circle cx="82" cy="293" r="5.5" fill="#6a8ac8" stroke="#3a5a98" stroke-width="0.8"/><path d="M73 295H86L90 291M86 295V306" fill="none" stroke="#806a20" stroke-width="0.8"/><ellipse cx="97" cy="311" rx="6" ry="2.5" fill="#f4f4f6" stroke="#777"/><path d="M91 311V321C91 324 103 324 103 321V311M91 316C91 319 103 319 103 316" fill="none" stroke="#777"/><circle cx="113" cy="334" r="6" fill="none" stroke="#7ab030" stroke-width="3"/><path d="M115 336L120 341" stroke="#7ab030" stroke-width="3.2"/><circle cx="112" cy="333.5" r="1.8" fill="#e87040"/><path d="M107 347C110 344 113 346 115 347C117 345 121 345 121 349C121 353 119 355 117 354C114 353 111 355 108 355C106 354 106 350 107 347Z" fill="#e6e6e8" stroke="#8a8a8c" stroke-width="0.9"/><path d="M107 365C110 362 113 364 115 365C117 363 121 363 121 367C121 371 119 373 117 372C114 371 111 373 108 373C106 372 106 368 107 365Z" fill="#e6e6e8" stroke="#8a8a8c" stroke-width="0.9"/><path d="M107 383C110 380 113 382 115 383C117 381 121 381 121 385C121 389 119 391 117 390C114 389 111 391 108 391C106 390 106 386 107 383Z" fill="#e6e6e8" stroke="#8a8a8c" stroke-width="0.9"/><path d="M107 401C110 398 113 400 115 401C117 399 121 399 121 403C121 407 119 409 117 408C114 407 111 409 108 409C106 408 106 404 107 401Z" fill="#e6e6e8" stroke="#8a8a8c" stroke-width="0.9"/><path d="M74 432C76 423 82 417 89 416C87 424 81 429 76 430Z" fill="#8aa8d0" stroke="#5a7aa8" stroke-width="0.8"/><path d="M74 439C74 434 86 433 89 438C90 442 88 445 86 445L85 450H83L82 445H79L78 449H76L76 444C74 443 74 441 74 439Z" fill="#5a86c4" stroke="#2a4a80" stroke-width="0.8"/><rect x="74.5" y="452.5" width="15" height="15" fill="#6a98d8" stroke="#4a70b0" stroke-dasharray="1 1"/><path d="M74 486C78 480 78 474 74 470C82 472 88 476 90 478C86 481 80 484 74 486Z" fill="#5a86c4" stroke="#2a4a80" stroke-width="0.6"/><rect x="73.5" y="490.5" width="16" height="11" rx="5" fill="#5a86c4" stroke="#2a4a80"/><circle cx="81.5" cy="514" r="7.5" fill="#a8c0e0" stroke="#5a7aa8"/><path d="M74 514H89M81.5 506.5V521.5" stroke="#5a7aa8" stroke-width="0.7"/><ellipse cx="81.5" cy="514" rx="3.5" ry="7.5" fill="none" stroke="#5a7aa8" stroke-width="0.7"/><circle cx="81.5" cy="568" r="7.5" fill="#a8c0e0" stroke="#5a7aa8"/><path d="M74 568H89M81.5 560.5V575.5" stroke="#5a7aa8" stroke-width="0.7"/><ellipse cx="81.5" cy="568" rx="3.5" ry="7.5" fill="none" stroke="#5a7aa8" stroke-width="0.7"/><circle cx="81.5" cy="586" r="7.5" fill="#a8c0e0" stroke="#5a7aa8"/><path d="M74 586H89M81.5 578.5V593.5" stroke="#5a7aa8" stroke-width="0.7"/><ellipse cx="81.5" cy="586" rx="3.5" ry="7.5" fill="none" stroke="#5a7aa8" stroke-width="0.7"/><rect x="74" y="525" width="15" height="15" fill="#4a5a78"/><path d="M79 525V540M84 525V540M74 530H89M74 535H89" stroke="#dfe6f0" stroke-width="1"/><rect x="74" y="543" width="4" height="4" fill="#6a98d8"/><rect x="74" y="548" width="4" height="4" fill="#6a98d8"/><rect x="74" y="553" width="4" height="4" fill="#6a98d8"/><rect x="79" y="543" width="4" height="4" fill="#6a98d8"/><rect x="79" y="548" width="4" height="4" fill="#6a98d8"/><rect x="79" y="553" width="4" height="4" fill="#6a98d8"/><rect x="84" y="543" width="4" height="4" fill="#6a98d8"/><rect x="84" y="548" width="4" height="4" fill="#6a98d8"/><rect x="84" y="553" width="4" height="4" fill="#6a98d8"/></g></svg>
<div class="t" style="left:397px;top:137.84px;font-size:12px;color:#fff;font-weight:bold;transform:scaleX(0.9811);transform-origin:0 0;">Qt:</div>
<div class="t" style="left:415px;top:137.84px;font-size:12px;color:#fff;transform:scaleX(0.8966);transform-origin:0 0;">Unable to obtain clipboard.</div>
<div class="t" style="left:1089px;top:137.84px;font-size:12px;color:#fff;font-style:italic;transform:scaleX(0.8836);transform-origin:0 0;">1 more</div>
<svg style="left:0;top:0" width="1692" height="950"><path d="M306.5 123.5H324.5M315.5 114.5V132.5" stroke="#fff" stroke-width="3"/><path d="M306.5 123.5H324.5M315.5 114.5V132.5" stroke="#000" stroke-width="1"/></svg>
</body></html>
